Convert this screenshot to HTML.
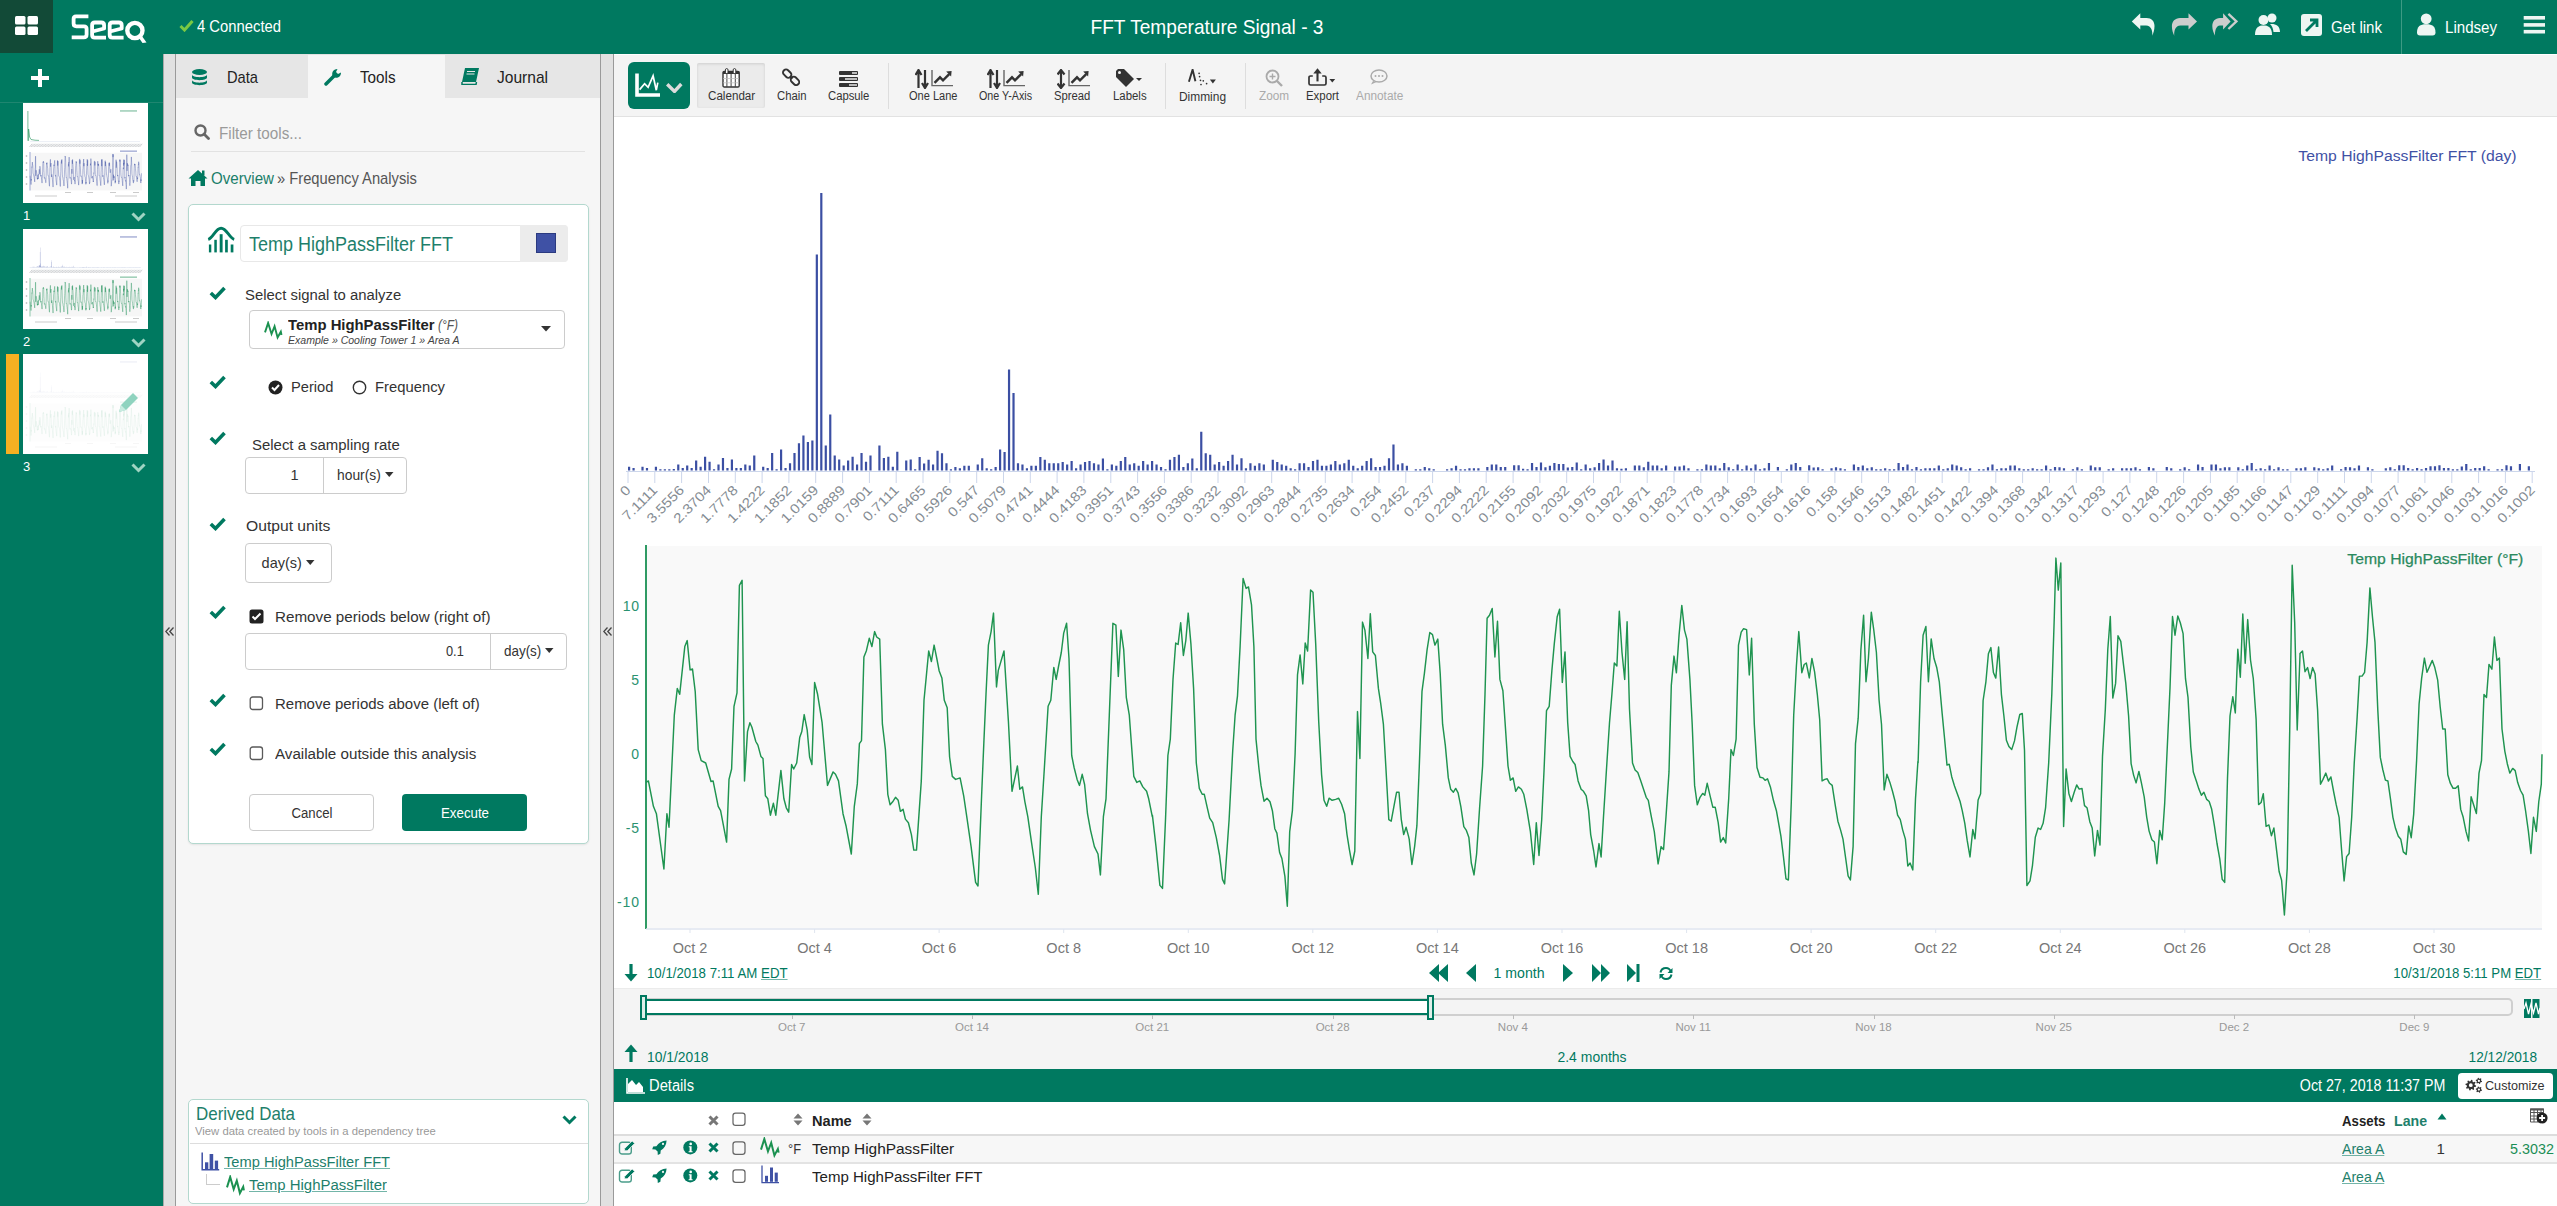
<!DOCTYPE html>
<html><head><meta charset="utf-8"><title>Seeq</title>
<style>
*{box-sizing:border-box;margin:0;padding:0}
html,body{width:2557px;height:1206px;overflow:hidden}
body{position:relative;font-family:"Liberation Sans",sans-serif;background:#fff;color:#333}
.a{position:absolute;display:block}
.t{position:absolute;line-height:1;white-space:nowrap}
u{text-decoration:underline;text-decoration-color:rgba(0,121,96,0.55)}
</style></head><body>

<div class="a" style="left:0px;top:0px;width:2557px;height:54px;background:#007960"></div>
<div class="a" style="left:0px;top:0px;width:53px;height:53px;background:#124a37"></div>
<svg class="a" style="left:15px;top:16px;" width="24" height="20" viewBox="0 0 24 20"><rect x="0" y="0" width="10.5" height="8.5" rx="1.5" fill="#fff"/><rect x="12.5" y="0" width="10.5" height="8.5" rx="1.5" fill="#fff"/><rect x="0" y="10.5" width="10.5" height="8.5" rx="1.5" fill="#fff"/><rect x="12.5" y="10.5" width="10.5" height="8.5" rx="1.5" fill="#fff"/></svg>
<svg class="a" style="left:65px;top:8px;" width="90" height="40" viewBox="0 0 90 40"><g stroke="#fff" stroke-width="3.8" fill="none" stroke-linejoin="round"><path d="M23.4 8.4 H11 Q8.6 8.4 8.6 11 V15.6 Q8.6 18.3 11.3 18.3 H19 Q21.6 18.3 21.6 21 V26.5 Q21.6 29.4 18.8 29.4 H6.7"/><path d="M41 29.6 H29.8 Q27.1 29.6 27.1 26.9 V17.2 Q27.1 14.5 29.8 14.5 H36.3 Q39.1 14.5 39.1 17.2 V20.5 L27.5 23.5"/><path d="M58.6 29.6 H47.4 Q44.7 29.6 44.7 26.9 V17.2 Q44.7 14.5 47.4 14.5 H53.9 Q56.7 14.5 56.7 17.2 V20.5 L45.1 23.5"/><circle cx="69.9" cy="22.5" r="7.6" stroke-width="4.4"/></g><path d="M72.5 28 L75.5 26 L81.5 34.5 L77.5 35Z" fill="#fff"/></svg>
<svg class="a" style="left:179px;top:19px;" width="15" height="13" viewBox="0 0 15 13"><path d="M1.5 7 L5.5 11 L13.5 2" stroke="#7ac943" stroke-width="3" fill="none"/></svg>
<div class="t " style="left:197.0px;top:18.5px;font-size:16px;color:#fff;font-weight:normal;transform-origin:0 0;transform:scaleX(0.926);">4 Connected</div>
<div class="t" style="left:1207.3px;top:16.0px;font-size:21px;color:#fff;font-weight:normal;transform:translateX(-50%) scaleX(0.910);">FFT Temperature Signal - 3</div>
<svg class="a" style="left:2130px;top:12px;" width="27" height="26" viewBox="0 0 27 26"><path d="M1.8 9.4 L10.3 1.2 V5.9 H16.5 C21.5 5.9 24.5 9 24.5 14 C24.5 18 23.2 21.5 22.3 23.8 C22.8 19.5 21.5 13.4 16 13.4 H10.3 V17.6 Z" fill="#eef6f3"/></svg>
<svg class="a" style="left:2168px;top:12px;" width="30" height="26" viewBox="0 0 30 26"><path d="M29 9.4 L20.5 1.2 V5.9 H12 C7 5.9 3.9 9.5 3.9 14 C3.9 18 5 21.5 6.3 23.8 C5.8 19.5 7 13.4 12.5 13.4 H20.5 V17.6 Z" fill="#cdcdcd"/></svg>
<svg class="a" style="left:2210px;top:12px;" width="28" height="26" viewBox="0 0 28 26"><path d="M20.6 9.4 L13.1 1.2 V5.9 H10 C5 5.9 2.3 9.5 2.3 14 C2.3 18 3.8 21.5 5.1 23.8 C4.6 19.5 6 13.4 10 13.4 H13.1 V17.6 Z" fill="#cdcdcd"/><path d="M18.4 1.8 L26.4 9.4 L18.4 17" stroke="#cdcdcd" stroke-width="2.3" fill="none"/></svg>
<svg class="a" style="left:2255px;top:13px;" width="26" height="23" viewBox="0 0 26 23"><circle cx="8.5" cy="7" r="5" fill="#eef6f3"/><path d="M0 22 C0 14 4 12.5 8.5 12.5 C13 12.5 17 14 17 22 Z" fill="#eef6f3"/><circle cx="17" cy="5" r="4.5" fill="#eef6f3"/><path d="M15 11 C20 10.5 25 12 25 19 L18.5 19 C18 15 17 13 15 11Z" fill="#eef6f3"/></svg>
<svg class="a" style="left:2301px;top:14px;" width="21" height="22" viewBox="0 0 21 22"><rect x="0" y="0" width="21" height="22" rx="3" fill="#eef6f3"/><path d="M5 17 L15 7 M9 6 L16 6 L16 13" stroke="#007960" stroke-width="2.8" fill="none"/></svg>
<div class="t " style="left:2331.0px;top:19.8px;font-size:16px;color:#fff;font-weight:normal;transform-origin:0 0;transform:scaleX(0.940);">Get link</div>
<div class="a" style="left:2401px;top:0px;width:1px;height:54px;background:#3d9a84"></div>
<svg class="a" style="left:2417px;top:13px;" width="19" height="23" viewBox="0 0 19 23"><circle cx="9.2" cy="5.8" r="5.4" fill="#eef6f3"/><path d="M0 19.5 C0 13.5 3 11.3 9.2 11.3 C15.5 11.3 18.5 13.5 18.5 19.5 Q18.5 22.4 15.5 22.4 H3 Q0 22.4 0 19.5Z" fill="#eef6f3"/></svg>
<div class="t " style="left:2445.0px;top:19.8px;font-size:16px;color:#fff;font-weight:normal;transform-origin:0 0;transform:scaleX(0.943);">Lindsey</div>
<svg class="a" style="left:2523px;top:16px;" width="23" height="18" viewBox="0 0 23 18"><rect x="0.7" y="0" width="21.3" height="3.6" fill="#eef6f3"/><rect x="0.7" y="7.1" width="21.3" height="3.6" fill="#eef6f3"/><rect x="0.7" y="13.9" width="21.3" height="3.6" fill="#eef6f3"/></svg>
<div class="a" style="left:0px;top:54px;width:163px;height:1152px;background:#007960"></div>
<div class="a" style="left:0px;top:102px;width:163px;height:1px;background:#1f8670"></div>
<svg class="a" style="left:31px;top:69px;" width="18" height="18" viewBox="0 0 18 18"><rect x="7" y="0" width="4" height="18" fill="#fff"/><rect x="0" y="7" width="18" height="4" fill="#fff"/></svg>
<div class="a" style="left:6px;top:354px;width:13px;height:100px;background:#f6b022"></div>
<svg class="a" style="left:23px;top:103px;" width="125" height="100" viewBox="0 0 125 100"><rect x="0" y="0" width="125" height="100" fill="#fff"/><path d="M4.9 37.8 V8 M5.6 37.8 V26 L6.6 34 L8 36.5 L12 37.2 L16 37.4" stroke="#1b8e55" stroke-width="0.7" fill="none" opacity="0.85"/><path d="M7 38.6 L117 38.6" stroke="#dde3ee" stroke-width="0.6"/><path d="M6.50 44 l2.6 -3.2 M8.05 44 l2.6 -3.2 M9.60 44 l2.6 -3.2 M11.15 44 l2.6 -3.2 M12.70 44 l2.6 -3.2 M14.25 44 l2.6 -3.2 M15.80 44 l2.6 -3.2 M17.35 44 l2.6 -3.2 M18.90 44 l2.6 -3.2 M20.45 44 l2.6 -3.2 M22.00 44 l2.6 -3.2 M23.55 44 l2.6 -3.2 M25.10 44 l2.6 -3.2 M26.65 44 l2.6 -3.2 M28.20 44 l2.6 -3.2 M29.75 44 l2.6 -3.2 M31.30 44 l2.6 -3.2 M32.85 44 l2.6 -3.2 M34.40 44 l2.6 -3.2 M35.95 44 l2.6 -3.2 M37.50 44 l2.6 -3.2 M39.05 44 l2.6 -3.2 M40.60 44 l2.6 -3.2 M42.15 44 l2.6 -3.2 M43.70 44 l2.6 -3.2 M45.25 44 l2.6 -3.2 M46.80 44 l2.6 -3.2 M48.35 44 l2.6 -3.2 M49.90 44 l2.6 -3.2 M51.45 44 l2.6 -3.2 M53.00 44 l2.6 -3.2 M54.55 44 l2.6 -3.2 M56.10 44 l2.6 -3.2 M57.65 44 l2.6 -3.2 M59.20 44 l2.6 -3.2 M60.75 44 l2.6 -3.2 M62.30 44 l2.6 -3.2 M63.85 44 l2.6 -3.2 M65.40 44 l2.6 -3.2 M66.95 44 l2.6 -3.2 M68.50 44 l2.6 -3.2 M70.05 44 l2.6 -3.2 M71.60 44 l2.6 -3.2 M73.15 44 l2.6 -3.2 M74.70 44 l2.6 -3.2 M76.25 44 l2.6 -3.2 M77.80 44 l2.6 -3.2 M79.35 44 l2.6 -3.2 M80.90 44 l2.6 -3.2 M82.45 44 l2.6 -3.2 M84.00 44 l2.6 -3.2 M85.55 44 l2.6 -3.2 M87.10 44 l2.6 -3.2 M88.65 44 l2.6 -3.2 M90.20 44 l2.6 -3.2 M91.75 44 l2.6 -3.2 M93.30 44 l2.6 -3.2 M94.85 44 l2.6 -3.2 M96.40 44 l2.6 -3.2 M97.95 44 l2.6 -3.2 M99.50 44 l2.6 -3.2 M101.05 44 l2.6 -3.2 M102.60 44 l2.6 -3.2 M104.15 44 l2.6 -3.2 M105.70 44 l2.6 -3.2 M107.25 44 l2.6 -3.2 M108.80 44 l2.6 -3.2 M110.35 44 l2.6 -3.2 M111.90 44 l2.6 -3.2 M113.45 44 l2.6 -3.2 M115.00 44 l2.6 -3.2 M116.55 44 l2.6 -3.2 " stroke="#8a8f95" stroke-width="0.55" opacity="0.7"/><rect x="7.5" y="49.8" width="111.5" height="37.6" fill="#f6f6f6"/><path d="M7 49 L7 87.5" stroke="#3f51a5" stroke-width="0.5"/><use href="#wv" stroke="#3f51a5" fill="none" stroke-width="6" opacity="0.8" transform="translate(-31 -3.95) scale(0.0588 0.0984)"/><rect x="97" y="7.3" width="17" height="1.3" fill="#1b8e55" opacity="0.5"/><rect x="97" y="47.5" width="17" height="1.3" fill="#3f51a5" opacity="0.5"/><path d="M3.5 52 V54 M3.5 59 V61 M3.5 66 V68 M3.5 73 V75 M3.5 80 V82" stroke="#999" stroke-width="1.4" opacity="0.5"/><path d="M42 89.5 h6 M64 89.5 h6 M87 89.5 h6 M110 89.5 h6" stroke="#aaa" stroke-width="1.1" opacity="0.6"/><path d="M12 93 h22 M92 93 h22" stroke="#aaa" stroke-width="1.1" opacity="0.6"/></svg>
<svg class="a" style="left:23px;top:229px;" width="125" height="100" viewBox="0 0 125 100"><rect x="0" y="0" width="125" height="100" fill="#fff"/><use href="#fb" fill="#3f51a5" transform="translate(-31 4.7) scale(0.0588 0.072)"/><path d="M7 38.6 L117 38.6" stroke="#dde3ee" stroke-width="0.6"/><path d="M6.50 44 l2.6 -3.2 M8.05 44 l2.6 -3.2 M9.60 44 l2.6 -3.2 M11.15 44 l2.6 -3.2 M12.70 44 l2.6 -3.2 M14.25 44 l2.6 -3.2 M15.80 44 l2.6 -3.2 M17.35 44 l2.6 -3.2 M18.90 44 l2.6 -3.2 M20.45 44 l2.6 -3.2 M22.00 44 l2.6 -3.2 M23.55 44 l2.6 -3.2 M25.10 44 l2.6 -3.2 M26.65 44 l2.6 -3.2 M28.20 44 l2.6 -3.2 M29.75 44 l2.6 -3.2 M31.30 44 l2.6 -3.2 M32.85 44 l2.6 -3.2 M34.40 44 l2.6 -3.2 M35.95 44 l2.6 -3.2 M37.50 44 l2.6 -3.2 M39.05 44 l2.6 -3.2 M40.60 44 l2.6 -3.2 M42.15 44 l2.6 -3.2 M43.70 44 l2.6 -3.2 M45.25 44 l2.6 -3.2 M46.80 44 l2.6 -3.2 M48.35 44 l2.6 -3.2 M49.90 44 l2.6 -3.2 M51.45 44 l2.6 -3.2 M53.00 44 l2.6 -3.2 M54.55 44 l2.6 -3.2 M56.10 44 l2.6 -3.2 M57.65 44 l2.6 -3.2 M59.20 44 l2.6 -3.2 M60.75 44 l2.6 -3.2 M62.30 44 l2.6 -3.2 M63.85 44 l2.6 -3.2 M65.40 44 l2.6 -3.2 M66.95 44 l2.6 -3.2 M68.50 44 l2.6 -3.2 M70.05 44 l2.6 -3.2 M71.60 44 l2.6 -3.2 M73.15 44 l2.6 -3.2 M74.70 44 l2.6 -3.2 M76.25 44 l2.6 -3.2 M77.80 44 l2.6 -3.2 M79.35 44 l2.6 -3.2 M80.90 44 l2.6 -3.2 M82.45 44 l2.6 -3.2 M84.00 44 l2.6 -3.2 M85.55 44 l2.6 -3.2 M87.10 44 l2.6 -3.2 M88.65 44 l2.6 -3.2 M90.20 44 l2.6 -3.2 M91.75 44 l2.6 -3.2 M93.30 44 l2.6 -3.2 M94.85 44 l2.6 -3.2 M96.40 44 l2.6 -3.2 M97.95 44 l2.6 -3.2 M99.50 44 l2.6 -3.2 M101.05 44 l2.6 -3.2 M102.60 44 l2.6 -3.2 M104.15 44 l2.6 -3.2 M105.70 44 l2.6 -3.2 M107.25 44 l2.6 -3.2 M108.80 44 l2.6 -3.2 M110.35 44 l2.6 -3.2 M111.90 44 l2.6 -3.2 M113.45 44 l2.6 -3.2 M115.00 44 l2.6 -3.2 M116.55 44 l2.6 -3.2 " stroke="#8a8f95" stroke-width="0.55" opacity="0.7"/><rect x="7.5" y="49.8" width="111.5" height="37.6" fill="#f6f6f6"/><path d="M7 49 L7 87.5" stroke="#1b8e55" stroke-width="0.5"/><use href="#wv" stroke="#1b8e55" fill="none" stroke-width="6" opacity="0.8" transform="translate(-31 -3.95) scale(0.0588 0.0984)"/><rect x="97" y="7.3" width="17" height="1.3" fill="#3f51a5" opacity="0.5"/><rect x="97" y="47.5" width="17" height="1.3" fill="#1b8e55" opacity="0.5"/><path d="M3.5 52 V54 M3.5 59 V61 M3.5 66 V68 M3.5 73 V75 M3.5 80 V82" stroke="#999" stroke-width="1.4" opacity="0.5"/><path d="M42 89.5 h6 M64 89.5 h6 M87 89.5 h6 M110 89.5 h6" stroke="#aaa" stroke-width="1.1" opacity="0.6"/><path d="M12 93 h22 M92 93 h22" stroke="#aaa" stroke-width="1.1" opacity="0.6"/></svg>
<svg class="a" style="left:23px;top:354px;" width="125" height="100" viewBox="0 0 125 100"><rect x="0" y="0" width="125" height="100" fill="#fff"/><g opacity="0.16"><use href="#fb" fill="#3f51a5" transform="translate(-31 4.7) scale(0.0588 0.072)"/><path d="M7 38.6 L117 38.6" stroke="#dde3ee" stroke-width="0.6"/><path d="M6.50 44 l2.6 -3.2 M8.05 44 l2.6 -3.2 M9.60 44 l2.6 -3.2 M11.15 44 l2.6 -3.2 M12.70 44 l2.6 -3.2 M14.25 44 l2.6 -3.2 M15.80 44 l2.6 -3.2 M17.35 44 l2.6 -3.2 M18.90 44 l2.6 -3.2 M20.45 44 l2.6 -3.2 M22.00 44 l2.6 -3.2 M23.55 44 l2.6 -3.2 M25.10 44 l2.6 -3.2 M26.65 44 l2.6 -3.2 M28.20 44 l2.6 -3.2 M29.75 44 l2.6 -3.2 M31.30 44 l2.6 -3.2 M32.85 44 l2.6 -3.2 M34.40 44 l2.6 -3.2 M35.95 44 l2.6 -3.2 M37.50 44 l2.6 -3.2 M39.05 44 l2.6 -3.2 M40.60 44 l2.6 -3.2 M42.15 44 l2.6 -3.2 M43.70 44 l2.6 -3.2 M45.25 44 l2.6 -3.2 M46.80 44 l2.6 -3.2 M48.35 44 l2.6 -3.2 M49.90 44 l2.6 -3.2 M51.45 44 l2.6 -3.2 M53.00 44 l2.6 -3.2 M54.55 44 l2.6 -3.2 M56.10 44 l2.6 -3.2 M57.65 44 l2.6 -3.2 M59.20 44 l2.6 -3.2 M60.75 44 l2.6 -3.2 M62.30 44 l2.6 -3.2 M63.85 44 l2.6 -3.2 M65.40 44 l2.6 -3.2 M66.95 44 l2.6 -3.2 M68.50 44 l2.6 -3.2 M70.05 44 l2.6 -3.2 M71.60 44 l2.6 -3.2 M73.15 44 l2.6 -3.2 M74.70 44 l2.6 -3.2 M76.25 44 l2.6 -3.2 M77.80 44 l2.6 -3.2 M79.35 44 l2.6 -3.2 M80.90 44 l2.6 -3.2 M82.45 44 l2.6 -3.2 M84.00 44 l2.6 -3.2 M85.55 44 l2.6 -3.2 M87.10 44 l2.6 -3.2 M88.65 44 l2.6 -3.2 M90.20 44 l2.6 -3.2 M91.75 44 l2.6 -3.2 M93.30 44 l2.6 -3.2 M94.85 44 l2.6 -3.2 M96.40 44 l2.6 -3.2 M97.95 44 l2.6 -3.2 M99.50 44 l2.6 -3.2 M101.05 44 l2.6 -3.2 M102.60 44 l2.6 -3.2 M104.15 44 l2.6 -3.2 M105.70 44 l2.6 -3.2 M107.25 44 l2.6 -3.2 M108.80 44 l2.6 -3.2 M110.35 44 l2.6 -3.2 M111.90 44 l2.6 -3.2 M113.45 44 l2.6 -3.2 M115.00 44 l2.6 -3.2 M116.55 44 l2.6 -3.2 " stroke="#8a8f95" stroke-width="0.55" opacity="0.7"/><rect x="7.5" y="49.8" width="111.5" height="37.6" fill="#f6f6f6"/><path d="M7 49 L7 87.5" stroke="#1b8e55" stroke-width="0.5"/><use href="#wv" stroke="#1b8e55" fill="none" stroke-width="6" opacity="0.8" transform="translate(-31 -3.95) scale(0.0588 0.0984)"/><rect x="97" y="7.3" width="17" height="1.3" fill="#3f51a5" opacity="0.5"/><rect x="97" y="47.5" width="17" height="1.3" fill="#1b8e55" opacity="0.5"/><path d="M3.5 52 V54 M3.5 59 V61 M3.5 66 V68 M3.5 73 V75 M3.5 80 V82" stroke="#999" stroke-width="1.4" opacity="0.5"/><path d="M42 89.5 h6 M64 89.5 h6 M87 89.5 h6 M110 89.5 h6" stroke="#aaa" stroke-width="1.1" opacity="0.6"/><path d="M12 93 h22 M92 93 h22" stroke="#aaa" stroke-width="1.1" opacity="0.6"/></g></svg>
<svg class="a" style="left:118px;top:391px;" width="22" height="22" viewBox="0 0 22 22"><path d="M1 21 L3 14 L15 2 L20 7 L8 19 Z" fill="#8fd3bf"/><path d="M1 21 L3 14 L8 19Z" fill="#c8ebe0"/></svg>
<div class="t " style="left:23.0px;top:209.0px;font-size:13px;color:#fff;font-weight:normal;transform-origin:0 0;">1</div>
<svg class="a" style="left:131px;top:212px;" width="15" height="10" viewBox="0 0 15 10"><path d="M1.5 1.5 L7.5 7.5 L13.5 1.5" stroke="#9fd4c3" stroke-width="3" fill="none"/></svg>
<div class="t " style="left:23.0px;top:335.0px;font-size:13px;color:#fff;font-weight:normal;transform-origin:0 0;">2</div>
<svg class="a" style="left:131px;top:338px;" width="15" height="10" viewBox="0 0 15 10"><path d="M1.5 1.5 L7.5 7.5 L13.5 1.5" stroke="#9fd4c3" stroke-width="3" fill="none"/></svg>
<div class="t " style="left:23.0px;top:460.0px;font-size:13px;color:#fff;font-weight:normal;transform-origin:0 0;">3</div>
<svg class="a" style="left:131px;top:463px;" width="15" height="10" viewBox="0 0 15 10"><path d="M1.5 1.5 L7.5 7.5 L13.5 1.5" stroke="#9fd4c3" stroke-width="3" fill="none"/></svg>
<div class="a" style="left:163px;top:54px;width:450px;height:1152px;background:#e1e1e1"></div>
<div class="a" style="left:175px;top:54px;width:1px;height:1152px;background:#9a9a9a"></div>
<div class="a" style="left:163px;top:54px;width:1px;height:1152px;background:#a9a9a9"></div>
<div class="a" style="left:600px;top:54px;width:1px;height:1152px;background:#9a9a9a"></div>
<div class="a" style="left:613px;top:54px;width:1px;height:1152px;background:#9a9a9a"></div>
<div class="a" style="left:176px;top:55px;width:424px;height:1151px;background:#f6f6f6"></div>
<div class="a" style="left:176px;top:55px;width:132px;height:43px;background:#e6e6e6"></div>
<div class="a" style="left:445px;top:55px;width:155px;height:43px;background:#e6e6e6"></div>
<svg class="a" style="left:192px;top:69px;" width="15" height="17" viewBox="0 0 15 17"><ellipse cx="7.5" cy="3" rx="7.5" ry="3" fill="#007960"/><path d="M0 5.5 C0 9 15 9 15 5.5 L15 8.5 C15 12 0 12 0 8.5Z" fill="#007960"/><path d="M0 11 C0 14.5 15 14.5 15 11 L15 13.5 C15 17 0 17 0 13.5Z" fill="#007960"/></svg>
<div class="t " style="left:227.0px;top:68.6px;font-size:17px;color:#222;font-weight:normal;transform-origin:0 0;transform:scaleX(0.863);">Data</div>
<svg class="a" style="left:324px;top:68px;" width="18" height="18" viewBox="0 0 18 18"><path d="M2 16 L10 8" stroke="#007960" stroke-width="3.5" stroke-linecap="round"/><path d="M9 9 C7 5 9 1 13.5 1 L12 4 L14 6 L17 4.5 C17 9 13 11 9 9Z" fill="#007960"/></svg>
<div class="t " style="left:359.5px;top:68.6px;font-size:17px;color:#222;font-weight:normal;transform-origin:0 0;transform:scaleX(0.897);">Tools</div>
<svg class="a" style="left:461px;top:68px;" width="18" height="17" viewBox="0 0 18 17"><path d="M4 0 L18 0 L15 14 L1 14 Z" fill="#007960"/><path d="M1 14 L1 16.5 L15 16.5 L15.5 14" stroke="#007960" stroke-width="1.5" fill="none"/><path d="M6 3.5 L14 3.5 M5.5 6 L13.5 6" stroke="#e6e6e6" stroke-width="1.2"/></svg>
<div class="t " style="left:496.5px;top:68.6px;font-size:17px;color:#222;font-weight:normal;transform-origin:0 0;transform:scaleX(0.915);">Journal</div>
<svg class="a" style="left:194px;top:124px;" width="16" height="17" viewBox="0 0 16 17"><circle cx="6.5" cy="6.5" r="5" stroke="#666" stroke-width="2.4" fill="none"/><path d="M10 10 L14.5 14.5" stroke="#666" stroke-width="2.8" stroke-linecap="round"/></svg>
<div class="t " style="left:219.0px;top:124.8px;font-size:16.5px;color:#9a9a9a;font-weight:normal;transform-origin:0 0;transform:scaleX(0.924);">Filter tools...</div>
<div class="a" style="left:191px;top:151px;width:394px;height:1px;background:#e2e2e2"></div>
<svg class="a" style="left:188px;top:169px;" width="20" height="17" viewBox="0 0 20 17"><path d="M10 1 L19.5 9.5 L17 9.5 L17 17 L12.5 17 L12.5 12 L7.5 12 L7.5 17 L3 17 L3 9.5 L0.5 9.5 Z" fill="#007960"/><rect x="14" y="1.5" width="2.5" height="5" fill="#007960"/></svg>
<div class="t " style="left:211.0px;top:169.6px;font-size:17px;color:#1a7e6a;font-weight:normal;transform-origin:0 0;transform:scaleX(0.889);">Overview</div>
<div class="t " style="left:277.0px;top:169.6px;font-size:17px;color:#555;font-weight:normal;transform-origin:0 0;transform:scaleX(0.866);">» Frequency Analysis</div>
<div class="a" style="left:188px;top:204px;width:401px;height:640px;background:#fff;border:1px solid #b3d8ce;border-radius:5px;box-shadow:0 1px 2px rgba(0,0,0,0.08)"></div>
<svg class="a" style="left:207px;top:226px;" width="29" height="28" viewBox="0 0 29 28"><path d="M1.2 13.4 C6 12 8.5 2.2 14.1 2.2 C19.7 2.2 22.2 12 27.2 13.4" stroke="#007960" stroke-width="2.9" fill="none"/><rect x="1.9" y="18.5" width="2.4" height="7.9" fill="#007960"/><rect x="7.3" y="13.8" width="2.5" height="12.6" fill="#007960"/><rect x="12.7" y="8.2" width="2.9" height="18.2" fill="#007960"/><rect x="18.1" y="13.8" width="2.7" height="12.6" fill="#007960"/><rect x="23.7" y="18.5" width="2.7" height="7.9" fill="#007960"/></svg>
<div class="a" style="left:240px;top:225px;width:328px;height:37px;background:#fff;border:1px solid #e8e8e8;border-radius:4px"></div>
<div class="a" style="left:520px;top:225px;width:48px;height:37px;background:#ececec;border-radius:0 4px 4px 0"></div>
<div class="a" style="left:536px;top:233px;width:20px;height:20px;background:#3f51a5;border:1px solid #2b3a80"></div>
<div class="t " style="left:248.5px;top:233.7px;font-size:20px;color:#1e7f6b;font-weight:normal;transform-origin:0 0;transform:scaleX(0.900);">Temp HighPassFilter FFT</div>
<svg class="a" style="left:209px;top:286px;" width="17" height="14" viewBox="0 0 17 14"><path d="M1.8 7 L6.5 11.5 L15.5 2" stroke="#007960" stroke-width="3.6" fill="none"/></svg>
<div class="t " style="left:245.3px;top:286.7px;font-size:15.2px;color:#333;font-weight:normal;transform-origin:0 0;transform:scaleX(0.979);">Select signal to analyze</div>
<div class="a" style="left:249px;top:310px;width:316px;height:39px;background:#fff;border:1px solid #ccc;border-radius:4px"></div>
<svg class="a" style="left:262.5px;top:320.5px;" width="21" height="19" viewBox="0 0 21 19"><path d="M2.00 11.37 L5.12 2.00 L8.53 12.99 L11.57 5.33 L14.59 16.50 L17.82 10.73 L18.50 14.06" stroke="#1b9150" stroke-width="1.9" fill="none" stroke-linejoin="miter"/></svg>
<div class="t " style="left:288.0px;top:316.8px;font-size:15px;color:#222;font-weight:bold;transform-origin:0 0;transform:scaleX(0.990);">Temp HighPassFilter</div>
<div class="t " style="left:438.0px;top:316.8px;font-size:15px;color:#555;font-weight:normal;transform-origin:0 0;transform:scaleX(0.795);"><i>(°F)</i></div>
<div class="t " style="left:288.0px;top:335.1px;font-size:11px;color:#444;font-weight:normal;transform-origin:0 0;transform:scaleX(0.957);"><i>Example » Cooling Tower 1 » Area A</i></div>
<svg class="a" style="left:541px;top:326px;" width="11" height="6" viewBox="0 0 11 6"><path d="M0 0 L10 0 L5 5.5Z" fill="#333"/></svg>
<svg class="a" style="left:209px;top:375px;" width="17" height="14" viewBox="0 0 17 14"><path d="M1.8 7 L6.5 11.5 L15.5 2" stroke="#007960" stroke-width="3.6" fill="none"/></svg>
<svg class="a" style="left:268px;top:380px;" width="15" height="15" viewBox="0 0 15 15"><circle cx="7.5" cy="7.5" r="7" fill="#222"/><path d="M4 7.5 L6.5 10 L11 5" stroke="#fff" stroke-width="2" fill="none"/></svg>
<div class="t " style="left:290.5px;top:379.1px;font-size:15.2px;color:#333;font-weight:normal;transform-origin:0 0;transform:scaleX(0.967);">Period</div>
<svg class="a" style="left:352px;top:380px;" width="15" height="15" viewBox="0 0 15 15"><circle cx="7.5" cy="7.5" r="6.2" stroke="#333" stroke-width="1.4" fill="none"/></svg>
<div class="t " style="left:374.5px;top:379.1px;font-size:15.2px;color:#333;font-weight:normal;transform-origin:0 0;transform:scaleX(0.975);">Frequency</div>
<svg class="a" style="left:209px;top:431px;" width="17" height="14" viewBox="0 0 17 14"><path d="M1.8 7 L6.5 11.5 L15.5 2" stroke="#007960" stroke-width="3.6" fill="none"/></svg>
<div class="t " style="left:252.0px;top:437.1px;font-size:15.2px;color:#333;font-weight:normal;transform-origin:0 0;transform:scaleX(0.983);">Select a sampling rate</div>
<div class="a" style="left:245px;top:457px;width:162px;height:37px;background:#fff;border:1px solid #ccc;border-radius:4px"></div>
<div class="a" style="left:323px;top:458px;width:1px;height:35px;background:#ccc"></div>
<div class="t " style="left:290.5px;top:467.7px;font-size:14.5px;color:#333;font-weight:normal;transform-origin:0 0;">1</div>
<div class="t " style="left:337.0px;top:467.7px;font-size:14.5px;color:#333;font-weight:normal;transform-origin:0 0;transform:scaleX(0.954);">hour(s)</div>
<svg class="a" style="left:385px;top:472px;" width="9" height="6" viewBox="0 0 9 6"><path d="M0 0 L8.5 0 L4.25 5Z" fill="#333"/></svg>
<svg class="a" style="left:209px;top:517px;" width="17" height="14" viewBox="0 0 17 14"><path d="M1.8 7 L6.5 11.5 L15.5 2" stroke="#007960" stroke-width="3.6" fill="none"/></svg>
<div class="t " style="left:245.6px;top:518.1px;font-size:15.2px;color:#333;font-weight:normal;transform-origin:0 0;transform:scaleX(1.031);">Output units</div>
<div class="a" style="left:245px;top:543px;width:87px;height:40px;background:#fff;border:1px solid #ccc;border-radius:4px"></div>
<div class="t " style="left:261.6px;top:555.7px;font-size:14.5px;color:#333;font-weight:normal;transform-origin:0 0;transform:scaleX(1.000);">day(s)</div>
<svg class="a" style="left:306px;top:560px;" width="9" height="6" viewBox="0 0 9 6"><path d="M0 0 L8.5 0 L4.25 5Z" fill="#333"/></svg>
<svg class="a" style="left:209px;top:605px;" width="17" height="14" viewBox="0 0 17 14"><path d="M1.8 7 L6.5 11.5 L15.5 2" stroke="#007960" stroke-width="3.6" fill="none"/></svg>
<svg class="a" style="left:249px;top:609px;" width="15" height="15" viewBox="0 0 15 15"><rect x="0.5" y="0.5" width="14" height="14" rx="2.5" fill="#222"/><path d="M3.5 7.5 L6 10 L11.5 4.5" stroke="#fff" stroke-width="2" fill="none"/></svg>
<div class="t " style="left:275.0px;top:609.1px;font-size:15.2px;color:#333;font-weight:normal;transform-origin:0 0;transform:scaleX(1.001);">Remove periods below (right of)</div>
<div class="a" style="left:245px;top:633px;width:322px;height:37px;background:#fff;border:1px solid #ccc;border-radius:4px"></div>
<div class="a" style="left:490px;top:634px;width:1px;height:35px;background:#ccc"></div>
<div class="t " style="left:446.2px;top:643.7px;font-size:14.5px;color:#333;font-weight:normal;transform-origin:0 0;transform:scaleX(0.883);">0.1</div>
<div class="t " style="left:504.0px;top:643.7px;font-size:14.5px;color:#333;font-weight:normal;transform-origin:0 0;transform:scaleX(0.926);">day(s)</div>
<svg class="a" style="left:545px;top:648px;" width="9" height="6" viewBox="0 0 9 6"><path d="M0 0 L8.5 0 L4.25 5Z" fill="#333"/></svg>
<svg class="a" style="left:209px;top:693px;" width="17" height="14" viewBox="0 0 17 14"><path d="M1.8 7 L6.5 11.5 L15.5 2" stroke="#007960" stroke-width="3.6" fill="none"/></svg>
<svg class="a" style="left:249px;top:696px;" width="15" height="15" viewBox="0 0 15 15"><rect x="1.2" y="1" width="12.3" height="12.5" rx="2.5" stroke="#5a5a5a" stroke-width="1.3" fill="#fff"/></svg>
<div class="t " style="left:275.3px;top:696.1px;font-size:15.2px;color:#333;font-weight:normal;transform-origin:0 0;transform:scaleX(0.986);">Remove periods above (left of)</div>
<svg class="a" style="left:209px;top:742px;" width="17" height="14" viewBox="0 0 17 14"><path d="M1.8 7 L6.5 11.5 L15.5 2" stroke="#007960" stroke-width="3.6" fill="none"/></svg>
<svg class="a" style="left:249px;top:746px;" width="15" height="15" viewBox="0 0 15 15"><rect x="1.2" y="1" width="12.3" height="12.5" rx="2.5" stroke="#5a5a5a" stroke-width="1.3" fill="#fff"/></svg>
<div class="t " style="left:274.5px;top:746.1px;font-size:15.2px;color:#333;font-weight:normal;transform-origin:0 0;transform:scaleX(0.999);">Available outside this analysis</div>
<div class="a" style="left:249px;top:794px;width:125px;height:37px;background:#fff;border:1px solid #ccc;border-radius:4px"></div>
<div class="t" style="left:311.5px;top:804.6px;font-size:15.5px;color:#333;font-weight:normal;transform:translateX(-50%) scaleX(0.850);">Cancel</div>
<div class="a" style="left:402px;top:794px;width:125px;height:37px;background:#007960;border-radius:4px"></div>
<div class="t" style="left:465.1px;top:804.6px;font-size:15.5px;color:#fff;font-weight:normal;transform:translateX(-50%) scaleX(0.857);">Execute</div>
<div class="a" style="left:188px;top:1099px;width:401px;height:105px;background:#fff;border:1px solid #b3d8ce;border-radius:5px"></div>
<div class="a" style="left:190px;top:1143px;width:398px;height:1px;background:#ddd"></div>
<div class="t " style="left:195.6px;top:1103.5px;font-size:19px;color:#1e7f6b;font-weight:normal;transform-origin:0 0;transform:scaleX(0.893);">Derived Data</div>
<div class="t " style="left:195.1px;top:1125.9px;font-size:11px;color:#999;font-weight:normal;transform-origin:0 0;transform:scaleX(1.026);">View data created by tools in a dependency tree</div>
<svg class="a" style="left:562px;top:1115px;" width="15" height="10" viewBox="0 0 15 10"><path d="M1.5 1.5 L7.5 7.5 L13.5 1.5" stroke="#007960" stroke-width="3" fill="none"/></svg>
<svg class="a" style="left:201px;top:1152px;" width="19" height="19" viewBox="0 0 19 19"><path d="M1.2 0.4 V17.7 H18.2" stroke="#3f51a5" stroke-width="1.5" fill="none"/><rect x="4" y="10.3" width="3.3" height="6.7" fill="#3f51a5"/><rect x="8.6" y="2" width="3.6" height="15" fill="#3f51a5"/><rect x="13.8" y="8.6" width="3.3" height="8.4" fill="#3f51a5"/></svg>
<div class="t " style="left:224.0px;top:1154.4px;font-size:15.5px;color:#1e7f6b;font-weight:normal;transform-origin:0 0;transform:scaleX(0.945);"><u>Temp HighPassFilter FFT</u></div>
<div class="a" style="left:206px;top:1174px;width:1px;height:11px;background:#ccc"></div>
<div class="a" style="left:206px;top:1184px;width:14px;height:1px;background:#ccc"></div>
<svg class="a" style="left:224.6px;top:1174.5px;" width="21" height="21" viewBox="0 0 21 21"><path d="M2.00 12.40 L5.19 2.00 L8.69 14.20 L11.80 5.70 L14.89 18.10 L18.21 11.69 L18.90 15.40" stroke="#1b9150" stroke-width="2.0" fill="none" stroke-linejoin="miter"/></svg>
<div class="t " style="left:249.0px;top:1177.4px;font-size:15.5px;color:#1e7f6b;font-weight:normal;transform-origin:0 0;transform:scaleX(0.965);"><u>Temp HighPassFilter</u></div>
<svg class="a" style="left:165px;top:627px;" width="10" height="10" viewBox="0 0 10 10"><path d="M4.5 0.5 L0.8 4.5 L4.5 8.5 M8.5 0.5 L4.8 4.5 L8.5 8.5" stroke="#444" stroke-width="1.3" fill="none"/></svg>
<svg class="a" style="left:603px;top:627px;" width="10" height="10" viewBox="0 0 10 10"><path d="M4.5 0.5 L0.8 4.5 L4.5 8.5 M8.5 0.5 L4.8 4.5 L8.5 8.5" stroke="#444" stroke-width="1.3" fill="none"/></svg>
<div class="a" style="left:614px;top:55px;width:1943px;height:62px;background:#f4f4f4"></div>
<div class="a" style="left:614px;top:116px;width:1943px;height:1px;background:#e2e2e2"></div>
<div class="a" style="left:628px;top:62px;width:62px;height:47px;background:#007960;border-radius:6px"></div>
<svg class="a" style="left:635px;top:73px;" width="26" height="25" viewBox="0 0 26 25"><path d="M2 0.5 V22 H25" stroke="#fff" stroke-width="3.6" fill="none"/><path d="M4.6 16.6 L9.6 10.7 L13.1 14.3 L18.1 2.8 L21.3 17.2 L22.8 9.6" stroke="#fff" stroke-width="1.7" fill="none"/></svg>
<svg class="a" style="left:666px;top:82px;" width="17" height="11" viewBox="0 0 17 11"><path d="M1.2 2.3 L8.5 9.4 L15.3 2" stroke="#dcdcdc" stroke-width="3.4" fill="none"/></svg>
<div class="a" style="left:697px;top:63px;width:68px;height:45px;background:#ebebeb;box-shadow:inset 0 1px 3px rgba(0,0,0,0.12);border-radius:2px"></div>
<svg class="a" style="left:722px;top:68px;" width="18" height="20" viewBox="0 0 18 20"><rect x="1" y="3.4" width="16.2" height="15.6" rx="1.3" stroke="#333" stroke-width="1.4" fill="#fff"/><rect x="1" y="3.4" width="16.2" height="2.6" fill="#333"/><rect x="3.4" y="0.6" width="2.6" height="5" rx="1.3" stroke="#333" stroke-width="1" fill="#fff"/><rect x="11.2" y="0.6" width="2.6" height="5" rx="1.3" stroke="#333" stroke-width="1" fill="#fff"/><path d="M4.9 6 V19 M9.1 6 V19 M13.3 6 V19" stroke="#444" stroke-width="1"/><path d="M1 10.5 H17 M1 14.8 H17" stroke="#bbb" stroke-width="0.7"/></svg>
<div class="t " style="left:707.8px;top:90.3px;font-size:12px;color:#333;font-weight:normal;transform-origin:0 0;transform:scaleX(0.969);">Calendar</div>
<svg class="a" style="left:782px;top:68px;" width="18" height="18" viewBox="0 0 18 18"><rect x="-4.6" y="-3" width="9.2" height="6" rx="2.8" transform="translate(5.2 5.6) rotate(45)" stroke="#333" stroke-width="1.9" fill="none"/><rect x="-4.6" y="-3" width="9.2" height="6" rx="2.8" transform="translate(13 12.9) rotate(45)" stroke="#333" stroke-width="1.9" fill="none"/><path d="M8 8.5 L10.3 10.6" stroke="#333" stroke-width="1.6"/></svg>
<div class="t " style="left:776.5px;top:90.3px;font-size:12px;color:#333;font-weight:normal;transform-origin:0 0;transform:scaleX(0.941);">Chain</div>
<svg class="a" style="left:839px;top:71px;" width="19" height="16" viewBox="0 0 19 16"><rect x="0" y="0" width="19" height="4" rx="1" fill="#333"/><rect x="0" y="6" width="19" height="4" rx="1" fill="#333"/><rect x="0" y="12" width="19" height="4" rx="1" fill="#333"/><rect x="13" y="1" width="5" height="2" fill="#bbb"/><rect x="6" y="7" width="12" height="2" fill="#bbb"/><rect x="10" y="13" width="8" height="2" fill="#bbb"/></svg>
<div class="t " style="left:827.8px;top:90.3px;font-size:12px;color:#333;font-weight:normal;transform-origin:0 0;transform:scaleX(0.940);">Capsule</div>
<div class="a" style="left:888px;top:63px;width:1px;height:46px;background:#ddd"></div>
<svg class="a" style="left:915px;top:69px;" width="39" height="20" viewBox="0 0 39 20"><path d="M3.5 19 L3.5 3 M0.5 6 L3.5 1 L6.5 6" stroke="#333" stroke-width="2.2" fill="none"/><path d="M10 1 L10 17 M7 14 L10 19 L13 14" stroke="#333" stroke-width="2.2" fill="none"/><path d="M17 1 L17 16.6 L38 16.6" stroke="#666" stroke-width="1.4" fill="none"/><path d="M19.5 13.8 L25 8.3 L28 11.3 L34.2 5.1" stroke="#333" stroke-width="2.4" fill="none"/><path d="M31.2 2.6 L36.6 2.1 L36.1 7.5Z" fill="#333"/></svg>
<div class="t " style="left:908.7px;top:90.3px;font-size:12px;color:#333;font-weight:normal;transform-origin:0 0;transform:scaleX(0.918);">One Lane</div>
<svg class="a" style="left:987px;top:69px;" width="39" height="20" viewBox="0 0 39 20"><path d="M3.5 19 L3.5 3 M0.5 6 L3.5 1 L6.5 6" stroke="#333" stroke-width="2.2" fill="none"/><path d="M10 1 L10 17 M7 14 L10 19 L13 14" stroke="#333" stroke-width="2.2" fill="none"/><path d="M17 1 L17 16.6 L38 16.6" stroke="#666" stroke-width="1.4" fill="none"/><path d="M19.5 13.8 L25 8.3 L28 11.3 L34.2 5.1" stroke="#333" stroke-width="2.4" fill="none"/><path d="M31.2 2.6 L36.6 2.1 L36.1 7.5Z" fill="#333"/></svg>
<div class="t " style="left:979.0px;top:90.3px;font-size:12px;color:#333;font-weight:normal;transform-origin:0 0;transform:scaleX(0.893);">One Y-Axis</div>
<svg class="a" style="left:1057px;top:69px;" width="34" height="20" viewBox="0 0 34 20"><path d="M4 3 L4 17 M0.5 5.5 L4 1 L7.5 5.5 M0.5 14.5 L4 19 L7.5 14.5" stroke="#333" stroke-width="2.2" fill="none"/><path d="M12 1 L12 16.6 L33 16.6" stroke="#666" stroke-width="1.4" fill="none"/><path d="M14.5 13.8 L20 8.3 L23 11.3 L29.2 5.1" stroke="#333" stroke-width="2.4" fill="none"/><path d="M26.2 2.6 L31.6 2.1 L31.1 7.5Z" fill="#333"/></svg>
<div class="t " style="left:1053.9px;top:90.3px;font-size:12px;color:#333;font-weight:normal;transform-origin:0 0;transform:scaleX(0.938);">Spread</div>
<svg class="a" style="left:1116px;top:69px;" width="26" height="19" viewBox="0 0 26 19"><path d="M0 2 L0 8 L10 18 L18 10 L8 0 L2 0Z" fill="#333"/><circle cx="3.5" cy="3.5" r="1.5" fill="#f4f4f4"/><path d="M20 9 L26 9 L23 12Z" fill="#333"/></svg>
<div class="t " style="left:1112.5px;top:90.3px;font-size:12px;color:#333;font-weight:normal;transform-origin:0 0;transform:scaleX(0.950);">Labels</div>
<div class="a" style="left:1165px;top:63px;width:1px;height:46px;background:#ddd"></div>
<svg class="a" style="left:1188px;top:69px;" width="29" height="18" viewBox="0 0 29 18"><path d="M0.9 12.8 L4.6 0.6 L7.4 12.2" stroke="#333" stroke-width="1.9" fill="none"/><circle cx="11.1" cy="4.3" r="0.85" fill="#333"/><circle cx="11.6" cy="7.6" r="0.85" fill="#333"/><circle cx="12.5" cy="11.3" r="0.85" fill="#333"/><circle cx="13" cy="15.5" r="0.85" fill="#333"/><circle cx="15.3" cy="11.8" r="0.85" fill="#333"/><circle cx="18.6" cy="14.6" r="0.85" fill="#333"/><path d="M21.9 10.4 H27.9 L24.9 14.4Z" fill="#333"/></svg>
<div class="t " style="left:1179.3px;top:91.3px;font-size:12px;color:#333;font-weight:normal;transform-origin:0 0;transform:scaleX(0.993);">Dimming</div>
<div class="a" style="left:1245px;top:63px;width:1px;height:46px;background:#ddd"></div>
<svg class="a" style="left:1265px;top:69px;" width="18" height="18" viewBox="0 0 18 18"><circle cx="7.5" cy="7.5" r="6" stroke="#aaa" stroke-width="1.8" fill="none"/><path d="M7.5 4.5 L7.5 10.5 M4.5 7.5 L10.5 7.5" stroke="#aaa" stroke-width="1.4"/><path d="M12 12 L17 17" stroke="#aaa" stroke-width="2.4"/></svg>
<div class="t " style="left:1258.9px;top:90.3px;font-size:12px;color:#aaa;font-weight:normal;transform-origin:0 0;transform:scaleX(0.981);">Zoom</div>
<svg class="a" style="left:1308px;top:68px;" width="28" height="18" viewBox="0 0 28 18"><path d="M4.8 8 H2.6 Q1 8 1 9.6 V15.4 Q1 17 2.6 17 H16.4 Q18 17 18 15.4 V9.6 Q18 8 16.4 8 H14.2" stroke="#333" stroke-width="1.7" fill="none"/><path d="M9.5 13.4 V3.5" stroke="#333" stroke-width="2.1"/><path d="M5.3 5.4 L9.5 0.2 L13.7 5.4Z" fill="#333"/><path d="M21.4 10.9 H27.2 L24.3 14.4Z" fill="#333"/></svg>
<div class="t " style="left:1306.0px;top:90.3px;font-size:12px;color:#333;font-weight:normal;transform-origin:0 0;transform:scaleX(0.951);">Export</div>
<svg class="a" style="left:1370px;top:69px;" width="18" height="16" viewBox="0 0 18 16"><ellipse cx="9" cy="7" rx="8" ry="6" stroke="#aaa" stroke-width="1.5" fill="none"/><path d="M3 12 L1 15.5 L6.5 13" fill="#aaa"/><circle cx="5.5" cy="7" r="1" fill="#aaa"/><circle cx="9" cy="7" r="1" fill="#aaa"/><circle cx="12.5" cy="7" r="1" fill="#aaa"/></svg>
<div class="t " style="left:1355.6px;top:90.3px;font-size:12px;color:#aaa;font-weight:normal;transform-origin:0 0;transform:scaleX(0.985);">Annotate</div>
<svg class="a" style="left:0;top:0" width="2557" height="1206" viewBox="0 0 2557 1206"><path d="M626 471.5 L2535 471.5" stroke="#ccd6eb" stroke-width="1.2"/><path d="M628.0 471 L628.0 483 M654.8 471 L654.8 483 M681.6 471 L681.6 483 M708.5 471 L708.5 483 M735.3 471 L735.3 483 M762.1 471 L762.1 483 M788.9 471 L788.9 483 M815.7 471 L815.7 483 M842.6 471 L842.6 483 M869.4 471 L869.4 483 M896.2 471 L896.2 483 M923.0 471 L923.0 483 M949.8 471 L949.8 483 M976.7 471 L976.7 483 M1003.5 471 L1003.5 483 M1030.3 471 L1030.3 483 M1057.1 471 L1057.1 483 M1083.9 471 L1083.9 483 M1110.8 471 L1110.8 483 M1137.6 471 L1137.6 483 M1164.4 471 L1164.4 483 M1191.2 471 L1191.2 483 M1218.0 471 L1218.0 483 M1244.9 471 L1244.9 483 M1271.7 471 L1271.7 483 M1298.5 471 L1298.5 483 M1325.3 471 L1325.3 483 M1352.1 471 L1352.1 483 M1379.0 471 L1379.0 483 M1405.8 471 L1405.8 483 M1432.6 471 L1432.6 483 M1459.4 471 L1459.4 483 M1486.2 471 L1486.2 483 M1513.1 471 L1513.1 483 M1539.9 471 L1539.9 483 M1566.7 471 L1566.7 483 M1593.5 471 L1593.5 483 M1620.3 471 L1620.3 483 M1647.2 471 L1647.2 483 M1674.0 471 L1674.0 483 M1700.8 471 L1700.8 483 M1727.6 471 L1727.6 483 M1754.4 471 L1754.4 483 M1781.3 471 L1781.3 483 M1808.1 471 L1808.1 483 M1834.9 471 L1834.9 483 M1861.7 471 L1861.7 483 M1888.5 471 L1888.5 483 M1915.4 471 L1915.4 483 M1942.2 471 L1942.2 483 M1969.0 471 L1969.0 483 M1995.8 471 L1995.8 483 M2022.6 471 L2022.6 483 M2049.5 471 L2049.5 483 M2076.3 471 L2076.3 483 M2103.1 471 L2103.1 483 M2129.9 471 L2129.9 483 M2156.7 471 L2156.7 483 M2183.6 471 L2183.6 483 M2210.4 471 L2210.4 483 M2237.2 471 L2237.2 483 M2264.0 471 L2264.0 483 M2290.8 471 L2290.8 483 M2317.7 471 L2317.7 483 M2344.5 471 L2344.5 483 M2371.3 471 L2371.3 483 M2398.1 471 L2398.1 483 M2424.9 471 L2424.9 483 M2451.8 471 L2451.8 483 M2478.6 471 L2478.6 483 M2505.4 471 L2505.4 483 M2532.2 471 L2532.2 483" stroke="#ccd6eb" stroke-width="1"/><defs><path id="fb" d="M628.00 466.7h2.2V470.5h-2.2ZM632.47 467.9h2.2V470.5h-2.2ZM641.41 466.7h2.2V470.5h-2.2ZM645.88 467.9h2.2V470.5h-2.2ZM654.82 466.7h2.2V470.5h-2.2ZM659.29 469.3h2.2V470.5h-2.2ZM663.76 469.3h2.2V470.5h-2.2ZM668.23 469.3h2.2V470.5h-2.2ZM672.70 469.1h2.2V470.5h-2.2ZM677.17 464.4h2.2V470.5h-2.2ZM681.64 467.9h2.2V470.5h-2.2ZM686.11 465.6h2.2V470.5h-2.2ZM690.58 467.9h2.2V470.5h-2.2ZM695.05 460.5h2.2V470.5h-2.2ZM699.52 466.7h2.2V470.5h-2.2ZM703.99 456.8h2.2V470.5h-2.2ZM708.46 461.7h2.2V470.5h-2.2ZM712.93 469.3h2.2V470.5h-2.2ZM717.40 464.4h2.2V470.5h-2.2ZM721.87 457.9h2.2V470.5h-2.2ZM726.34 467.9h2.2V470.5h-2.2ZM730.81 459.4h2.2V470.5h-2.2ZM735.28 467.9h2.2V470.5h-2.2ZM739.75 467.9h2.2V470.5h-2.2ZM744.22 464.4h2.2V470.5h-2.2ZM748.69 465.6h2.2V470.5h-2.2ZM753.16 455.6h2.2V470.5h-2.2ZM762.10 466.7h2.2V470.5h-2.2ZM766.57 467.9h2.2V470.5h-2.2ZM771.04 453.1h2.2V470.5h-2.2ZM775.51 469.3h2.2V470.5h-2.2ZM779.98 449.4h2.2V470.5h-2.2ZM784.45 467.9h2.2V470.5h-2.2ZM788.92 463.2h2.2V470.5h-2.2ZM793.39 453.1h2.2V470.5h-2.2ZM797.86 443.3h2.2V470.5h-2.2ZM802.33 435.5h2.2V470.5h-2.2ZM806.80 442.0h2.2V470.5h-2.2ZM811.27 440.6h2.2V470.5h-2.2ZM815.74 254.5h2.2V470.5h-2.2ZM820.21 193.0h2.2V470.5h-2.2ZM824.68 445.6h2.2V470.5h-2.2ZM829.15 414.5h2.2V470.5h-2.2ZM833.62 455.6h2.2V470.5h-2.2ZM838.09 459.4h2.2V470.5h-2.2ZM842.56 465.6h2.2V470.5h-2.2ZM847.03 460.5h2.2V470.5h-2.2ZM851.50 456.8h2.2V470.5h-2.2ZM855.97 464.4h2.2V470.5h-2.2ZM860.44 453.1h2.2V470.5h-2.2ZM864.91 461.7h2.2V470.5h-2.2ZM869.38 455.6h2.2V470.5h-2.2ZM878.32 445.6h2.2V470.5h-2.2ZM882.79 457.9h2.2V470.5h-2.2ZM887.26 456.8h2.2V470.5h-2.2ZM891.73 466.7h2.2V470.5h-2.2ZM896.20 451.7h2.2V470.5h-2.2ZM905.14 460.5h2.2V470.5h-2.2ZM909.61 459.4h2.2V470.5h-2.2ZM914.08 469.3h2.2V470.5h-2.2ZM918.55 457.0h2.2V470.5h-2.2ZM923.02 463.5h2.2V470.5h-2.2ZM927.49 459.7h2.2V470.5h-2.2ZM931.96 464.4h2.2V470.5h-2.2ZM936.43 450.8h2.2V470.5h-2.2ZM940.90 453.3h2.2V470.5h-2.2ZM945.37 463.2h2.2V470.5h-2.2ZM949.84 469.3h2.2V470.5h-2.2ZM954.31 467.0h2.2V470.5h-2.2ZM958.78 468.2h2.2V470.5h-2.2ZM963.25 465.8h2.2V470.5h-2.2ZM967.72 465.8h2.2V470.5h-2.2ZM976.66 464.4h2.2V470.5h-2.2ZM981.13 458.2h2.2V470.5h-2.2ZM985.60 468.2h2.2V470.5h-2.2ZM990.07 469.3h2.2V470.5h-2.2ZM994.54 467.0h2.2V470.5h-2.2ZM999.01 449.6h2.2V470.5h-2.2ZM1003.48 452.0h2.2V470.5h-2.2ZM1007.95 369.6h2.2V470.5h-2.2ZM1012.42 393.1h2.2V470.5h-2.2ZM1016.89 463.2h2.2V470.5h-2.2ZM1021.36 464.4h2.2V470.5h-2.2ZM1025.83 468.2h2.2V470.5h-2.2ZM1030.30 465.8h2.2V470.5h-2.2ZM1034.77 465.8h2.2V470.5h-2.2ZM1039.24 457.0h2.2V470.5h-2.2ZM1043.71 459.7h2.2V470.5h-2.2ZM1048.18 463.2h2.2V470.5h-2.2ZM1052.65 463.2h2.2V470.5h-2.2ZM1057.12 463.2h2.2V470.5h-2.2ZM1061.59 462.1h2.2V470.5h-2.2ZM1066.06 464.4h2.2V470.5h-2.2ZM1070.53 460.9h2.2V470.5h-2.2ZM1075.00 468.2h2.2V470.5h-2.2ZM1079.47 464.4h2.2V470.5h-2.2ZM1083.94 462.1h2.2V470.5h-2.2ZM1088.41 460.9h2.2V470.5h-2.2ZM1092.88 463.2h2.2V470.5h-2.2ZM1097.35 464.4h2.2V470.5h-2.2ZM1101.82 458.5h2.2V470.5h-2.2ZM1106.29 469.3h2.2V470.5h-2.2ZM1110.76 464.4h2.2V470.5h-2.2ZM1115.23 465.8h2.2V470.5h-2.2ZM1119.70 460.9h2.2V470.5h-2.2ZM1124.17 457.0h2.2V470.5h-2.2ZM1128.64 464.4h2.2V470.5h-2.2ZM1133.11 463.2h2.2V470.5h-2.2ZM1137.58 465.8h2.2V470.5h-2.2ZM1142.05 460.9h2.2V470.5h-2.2ZM1146.52 464.4h2.2V470.5h-2.2ZM1150.99 460.9h2.2V470.5h-2.2ZM1155.46 464.4h2.2V470.5h-2.2ZM1159.93 467.0h2.2V470.5h-2.2ZM1164.40 469.3h2.2V470.5h-2.2ZM1168.87 459.7h2.2V470.5h-2.2ZM1173.34 457.0h2.2V470.5h-2.2ZM1177.81 454.7h2.2V470.5h-2.2ZM1182.28 467.0h2.2V470.5h-2.2ZM1186.75 463.2h2.2V470.5h-2.2ZM1191.22 458.5h2.2V470.5h-2.2ZM1195.69 468.2h2.2V470.5h-2.2ZM1200.16 431.8h2.2V470.5h-2.2ZM1204.63 453.3h2.2V470.5h-2.2ZM1209.10 454.7h2.2V470.5h-2.2ZM1213.57 464.4h2.2V470.5h-2.2ZM1218.04 462.1h2.2V470.5h-2.2ZM1222.51 465.8h2.2V470.5h-2.2ZM1226.98 460.9h2.2V470.5h-2.2ZM1231.45 454.7h2.2V470.5h-2.2ZM1235.92 464.4h2.2V470.5h-2.2ZM1240.39 458.2h2.2V470.5h-2.2ZM1244.86 468.2h2.2V470.5h-2.2ZM1249.33 463.2h2.2V470.5h-2.2ZM1253.80 465.8h2.2V470.5h-2.2ZM1258.27 463.2h2.2V470.5h-2.2ZM1262.74 464.4h2.2V470.5h-2.2ZM1271.68 459.7h2.2V470.5h-2.2ZM1276.15 462.1h2.2V470.5h-2.2ZM1280.62 464.4h2.2V470.5h-2.2ZM1285.09 465.8h2.2V470.5h-2.2ZM1289.56 468.2h2.2V470.5h-2.2ZM1294.03 469.3h2.2V470.5h-2.2ZM1298.50 463.2h2.2V470.5h-2.2ZM1302.97 463.2h2.2V470.5h-2.2ZM1307.44 467.0h2.2V470.5h-2.2ZM1311.91 460.9h2.2V470.5h-2.2ZM1316.38 459.7h2.2V470.5h-2.2ZM1320.85 465.8h2.2V470.5h-2.2ZM1325.32 465.8h2.2V470.5h-2.2ZM1329.79 464.4h2.2V470.5h-2.2ZM1334.26 460.9h2.2V470.5h-2.2ZM1338.73 464.4h2.2V470.5h-2.2ZM1343.20 463.2h2.2V470.5h-2.2ZM1347.67 459.7h2.2V470.5h-2.2ZM1352.14 465.8h2.2V470.5h-2.2ZM1356.61 468.2h2.2V470.5h-2.2ZM1361.08 465.8h2.2V470.5h-2.2ZM1365.55 460.9h2.2V470.5h-2.2ZM1370.02 458.2h2.2V470.5h-2.2ZM1374.49 467.0h2.2V470.5h-2.2ZM1378.96 467.0h2.2V470.5h-2.2ZM1383.43 465.8h2.2V470.5h-2.2ZM1387.90 458.2h2.2V470.5h-2.2ZM1392.37 444.5h2.2V470.5h-2.2ZM1396.84 464.4h2.2V470.5h-2.2ZM1401.31 463.2h2.2V470.5h-2.2ZM1405.78 465.8h2.2V470.5h-2.2ZM1414.72 469.3h2.2V470.5h-2.2ZM1419.19 469.3h2.2V470.5h-2.2ZM1423.66 467.0h2.2V470.5h-2.2ZM1428.13 468.2h2.2V470.5h-2.2ZM1432.60 469.3h2.2V470.5h-2.2ZM1446.01 469.3h2.2V470.5h-2.2ZM1450.48 468.2h2.2V470.5h-2.2ZM1454.95 465.8h2.2V470.5h-2.2ZM1459.42 469.3h2.2V470.5h-2.2ZM1463.89 469.3h2.2V470.5h-2.2ZM1468.36 468.2h2.2V470.5h-2.2ZM1472.83 468.2h2.2V470.5h-2.2ZM1477.30 468.2h2.2V470.5h-2.2ZM1486.24 467.0h2.2V470.5h-2.2ZM1490.71 464.4h2.2V470.5h-2.2ZM1495.18 464.4h2.2V470.5h-2.2ZM1499.65 467.0h2.2V470.5h-2.2ZM1504.12 467.0h2.2V470.5h-2.2ZM1513.06 465.2h2.2V470.5h-2.2ZM1517.53 465.2h2.2V470.5h-2.2ZM1522.00 468.7h2.2V470.5h-2.2ZM1526.47 469.3h2.2V470.5h-2.2ZM1530.94 462.9h2.2V470.5h-2.2ZM1535.41 467.0h2.2V470.5h-2.2ZM1539.88 462.6h2.2V470.5h-2.2ZM1544.35 467.3h2.2V470.5h-2.2ZM1548.82 465.8h2.2V470.5h-2.2ZM1553.29 462.9h2.2V470.5h-2.2ZM1557.76 464.0h2.2V470.5h-2.2ZM1562.23 464.0h2.2V470.5h-2.2ZM1566.70 467.6h2.2V470.5h-2.2ZM1571.17 467.0h2.2V470.5h-2.2ZM1575.64 462.6h2.2V470.5h-2.2ZM1580.11 469.3h2.2V470.5h-2.2ZM1584.58 464.4h2.2V470.5h-2.2ZM1589.05 468.2h2.2V470.5h-2.2ZM1593.52 467.3h2.2V470.5h-2.2ZM1597.99 462.9h2.2V470.5h-2.2ZM1602.46 459.4h2.2V470.5h-2.2ZM1606.93 465.5h2.2V470.5h-2.2ZM1611.40 460.5h2.2V470.5h-2.2ZM1615.87 468.2h2.2V470.5h-2.2ZM1620.34 468.7h2.2V470.5h-2.2ZM1624.81 468.2h2.2V470.5h-2.2ZM1633.75 465.5h2.2V470.5h-2.2ZM1638.22 465.5h2.2V470.5h-2.2ZM1642.69 467.3h2.2V470.5h-2.2ZM1647.16 461.7h2.2V470.5h-2.2ZM1651.63 465.5h2.2V470.5h-2.2ZM1656.10 465.5h2.2V470.5h-2.2ZM1660.57 468.2h2.2V470.5h-2.2ZM1665.04 465.5h2.2V470.5h-2.2ZM1673.98 466.4h2.2V470.5h-2.2ZM1678.45 466.4h2.2V470.5h-2.2ZM1682.92 465.5h2.2V470.5h-2.2ZM1687.39 468.2h2.2V470.5h-2.2ZM1696.33 469.3h2.2V470.5h-2.2ZM1700.80 469.3h2.2V470.5h-2.2ZM1705.27 464.4h2.2V470.5h-2.2ZM1709.74 465.5h2.2V470.5h-2.2ZM1714.21 465.5h2.2V470.5h-2.2ZM1718.68 468.2h2.2V470.5h-2.2ZM1723.15 462.9h2.2V470.5h-2.2ZM1727.62 467.3h2.2V470.5h-2.2ZM1732.09 469.3h2.2V470.5h-2.2ZM1736.56 464.4h2.2V470.5h-2.2ZM1741.03 469.3h2.2V470.5h-2.2ZM1745.50 465.5h2.2V470.5h-2.2ZM1749.97 468.2h2.2V470.5h-2.2ZM1754.44 464.4h2.2V470.5h-2.2ZM1758.91 469.3h2.2V470.5h-2.2ZM1763.38 468.2h2.2V470.5h-2.2ZM1767.85 462.9h2.2V470.5h-2.2ZM1776.79 467.0h2.2V470.5h-2.2ZM1785.73 469.3h2.2V470.5h-2.2ZM1790.20 464.4h2.2V470.5h-2.2ZM1794.67 462.9h2.2V470.5h-2.2ZM1799.14 467.0h2.2V470.5h-2.2ZM1808.08 465.2h2.2V470.5h-2.2ZM1812.55 467.6h2.2V470.5h-2.2ZM1817.02 467.3h2.2V470.5h-2.2ZM1821.49 469.3h2.2V470.5h-2.2ZM1830.43 468.2h2.2V470.5h-2.2ZM1834.90 467.3h2.2V470.5h-2.2ZM1839.37 468.2h2.2V470.5h-2.2ZM1843.84 469.3h2.2V470.5h-2.2ZM1852.78 464.4h2.2V470.5h-2.2ZM1857.25 467.0h2.2V470.5h-2.2ZM1861.72 465.5h2.2V470.5h-2.2ZM1866.19 468.2h2.2V470.5h-2.2ZM1870.66 467.3h2.2V470.5h-2.2ZM1875.13 469.3h2.2V470.5h-2.2ZM1879.60 469.3h2.2V470.5h-2.2ZM1884.07 468.2h2.2V470.5h-2.2ZM1888.54 469.3h2.2V470.5h-2.2ZM1893.01 469.3h2.2V470.5h-2.2ZM1897.48 462.9h2.2V470.5h-2.2ZM1901.95 467.0h2.2V470.5h-2.2ZM1906.42 464.4h2.2V470.5h-2.2ZM1910.89 469.3h2.2V470.5h-2.2ZM1915.36 467.0h2.2V470.5h-2.2ZM1919.83 469.3h2.2V470.5h-2.2ZM1924.30 468.2h2.2V470.5h-2.2ZM1928.77 468.2h2.2V470.5h-2.2ZM1933.24 468.2h2.2V470.5h-2.2ZM1937.71 465.5h2.2V470.5h-2.2ZM1942.18 469.3h2.2V470.5h-2.2ZM1946.65 468.2h2.2V470.5h-2.2ZM1951.12 464.4h2.2V470.5h-2.2ZM1955.59 465.5h2.2V470.5h-2.2ZM1960.06 467.3h2.2V470.5h-2.2ZM1964.53 469.3h2.2V470.5h-2.2ZM1969.00 468.2h2.2V470.5h-2.2ZM1977.94 469.3h2.2V470.5h-2.2ZM1982.41 469.3h2.2V470.5h-2.2ZM1986.88 467.3h2.2V470.5h-2.2ZM1991.35 464.4h2.2V470.5h-2.2ZM1995.82 469.3h2.2V470.5h-2.2ZM2000.29 468.2h2.2V470.5h-2.2ZM2004.76 468.2h2.2V470.5h-2.2ZM2009.23 465.5h2.2V470.5h-2.2ZM2013.70 465.5h2.2V470.5h-2.2ZM2018.17 468.2h2.2V470.5h-2.2ZM2022.64 469.3h2.2V470.5h-2.2ZM2027.11 469.3h2.2V470.5h-2.2ZM2031.58 468.2h2.2V470.5h-2.2ZM2036.05 469.3h2.2V470.5h-2.2ZM2040.52 469.3h2.2V470.5h-2.2ZM2044.99 465.5h2.2V470.5h-2.2ZM2049.46 469.3h2.2V470.5h-2.2ZM2053.93 467.0h2.2V470.5h-2.2ZM2058.40 467.3h2.2V470.5h-2.2ZM2062.87 468.2h2.2V470.5h-2.2ZM2071.81 469.3h2.2V470.5h-2.2ZM2076.28 467.3h2.2V470.5h-2.2ZM2080.75 469.3h2.2V470.5h-2.2ZM2089.69 465.5h2.2V470.5h-2.2ZM2094.16 467.3h2.2V470.5h-2.2ZM2098.63 467.3h2.2V470.5h-2.2ZM2107.57 469.3h2.2V470.5h-2.2ZM2112.04 468.2h2.2V470.5h-2.2ZM2120.98 468.2h2.2V470.5h-2.2ZM2125.45 468.2h2.2V470.5h-2.2ZM2129.92 468.2h2.2V470.5h-2.2ZM2134.39 467.3h2.2V470.5h-2.2ZM2138.86 469.3h2.2V470.5h-2.2ZM2147.80 467.0h2.2V470.5h-2.2ZM2152.27 468.2h2.2V470.5h-2.2ZM2165.68 467.0h2.2V470.5h-2.2ZM2170.15 468.2h2.2V470.5h-2.2ZM2179.09 469.3h2.2V470.5h-2.2ZM2183.56 467.3h2.2V470.5h-2.2ZM2188.03 469.3h2.2V470.5h-2.2ZM2196.97 464.4h2.2V470.5h-2.2ZM2201.44 467.0h2.2V470.5h-2.2ZM2210.38 464.4h2.2V470.5h-2.2ZM2214.85 464.4h2.2V470.5h-2.2ZM2219.32 468.2h2.2V470.5h-2.2ZM2223.79 467.3h2.2V470.5h-2.2ZM2228.26 467.3h2.2V470.5h-2.2ZM2237.20 467.3h2.2V470.5h-2.2ZM2241.67 469.3h2.2V470.5h-2.2ZM2246.14 465.5h2.2V470.5h-2.2ZM2250.61 462.9h2.2V470.5h-2.2ZM2255.08 469.3h2.2V470.5h-2.2ZM2259.55 468.2h2.2V470.5h-2.2ZM2264.02 469.3h2.2V470.5h-2.2ZM2268.49 465.5h2.2V470.5h-2.2ZM2272.96 469.3h2.2V470.5h-2.2ZM2277.43 467.3h2.2V470.5h-2.2ZM2281.90 469.3h2.2V470.5h-2.2ZM2286.37 469.3h2.2V470.5h-2.2ZM2295.31 468.2h2.2V470.5h-2.2ZM2299.78 468.2h2.2V470.5h-2.2ZM2304.25 467.3h2.2V470.5h-2.2ZM2313.19 467.3h2.2V470.5h-2.2ZM2317.66 468.2h2.2V470.5h-2.2ZM2322.13 469.3h2.2V470.5h-2.2ZM2326.60 468.2h2.2V470.5h-2.2ZM2331.07 465.5h2.2V470.5h-2.2ZM2340.01 469.3h2.2V470.5h-2.2ZM2344.48 467.0h2.2V470.5h-2.2ZM2348.95 467.3h2.2V470.5h-2.2ZM2353.42 468.2h2.2V470.5h-2.2ZM2357.89 465.5h2.2V470.5h-2.2ZM2366.83 467.3h2.2V470.5h-2.2ZM2371.30 469.3h2.2V470.5h-2.2ZM2384.71 468.2h2.2V470.5h-2.2ZM2389.18 467.3h2.2V470.5h-2.2ZM2393.65 469.3h2.2V470.5h-2.2ZM2398.12 465.3h2.2V470.5h-2.2ZM2402.59 465.3h2.2V470.5h-2.2ZM2407.06 467.9h2.2V470.5h-2.2ZM2411.53 469.2h2.2V470.5h-2.2ZM2416.00 467.9h2.2V470.5h-2.2ZM2420.47 469.2h2.2V470.5h-2.2ZM2424.94 467.9h2.2V470.5h-2.2ZM2429.41 466.3h2.2V470.5h-2.2ZM2433.88 466.3h2.2V470.5h-2.2ZM2438.35 465.3h2.2V470.5h-2.2ZM2442.82 467.9h2.2V470.5h-2.2ZM2447.29 467.9h2.2V470.5h-2.2ZM2451.76 469.2h2.2V470.5h-2.2ZM2456.23 469.2h2.2V470.5h-2.2ZM2460.70 466.6h2.2V470.5h-2.2ZM2465.17 464.0h2.2V470.5h-2.2ZM2469.64 469.2h2.2V470.5h-2.2ZM2474.11 467.9h2.2V470.5h-2.2ZM2478.58 467.9h2.2V470.5h-2.2ZM2483.05 466.3h2.2V470.5h-2.2ZM2487.52 469.2h2.2V470.5h-2.2ZM2496.46 469.2h2.2V470.5h-2.2ZM2500.93 469.2h2.2V470.5h-2.2ZM2505.40 465.3h2.2V470.5h-2.2ZM2509.87 466.3h2.2V470.5h-2.2ZM2518.81 464.0h2.2V470.5h-2.2ZM2527.75 466.3h2.2V470.5h-2.2Z"/></defs><use href="#fb" fill="#3b4fa3"/><g font-family="Liberation Sans" font-size="13.5" fill="#858c93"><text transform="translate(631.5 491) rotate(-45) scale(1.13 1)" text-anchor="end">0</text><text transform="translate(658.3 491) rotate(-45) scale(1.13 1)" text-anchor="end">7.1111</text><text transform="translate(685.1 491) rotate(-45) scale(1.13 1)" text-anchor="end">3.5556</text><text transform="translate(712.0 491) rotate(-45) scale(1.13 1)" text-anchor="end">2.3704</text><text transform="translate(738.8 491) rotate(-45) scale(1.13 1)" text-anchor="end">1.7778</text><text transform="translate(765.6 491) rotate(-45) scale(1.13 1)" text-anchor="end">1.4222</text><text transform="translate(792.4 491) rotate(-45) scale(1.13 1)" text-anchor="end">1.1852</text><text transform="translate(819.2 491) rotate(-45) scale(1.13 1)" text-anchor="end">1.0159</text><text transform="translate(846.1 491) rotate(-45) scale(1.13 1)" text-anchor="end">0.8889</text><text transform="translate(872.9 491) rotate(-45) scale(1.13 1)" text-anchor="end">0.7901</text><text transform="translate(899.7 491) rotate(-45) scale(1.13 1)" text-anchor="end">0.7111</text><text transform="translate(926.5 491) rotate(-45) scale(1.13 1)" text-anchor="end">0.6465</text><text transform="translate(953.3 491) rotate(-45) scale(1.13 1)" text-anchor="end">0.5926</text><text transform="translate(980.2 491) rotate(-45) scale(1.13 1)" text-anchor="end">0.547</text><text transform="translate(1007.0 491) rotate(-45) scale(1.13 1)" text-anchor="end">0.5079</text><text transform="translate(1033.8 491) rotate(-45) scale(1.13 1)" text-anchor="end">0.4741</text><text transform="translate(1060.6 491) rotate(-45) scale(1.13 1)" text-anchor="end">0.4444</text><text transform="translate(1087.4 491) rotate(-45) scale(1.13 1)" text-anchor="end">0.4183</text><text transform="translate(1114.3 491) rotate(-45) scale(1.13 1)" text-anchor="end">0.3951</text><text transform="translate(1141.1 491) rotate(-45) scale(1.13 1)" text-anchor="end">0.3743</text><text transform="translate(1167.9 491) rotate(-45) scale(1.13 1)" text-anchor="end">0.3556</text><text transform="translate(1194.7 491) rotate(-45) scale(1.13 1)" text-anchor="end">0.3386</text><text transform="translate(1221.5 491) rotate(-45) scale(1.13 1)" text-anchor="end">0.3232</text><text transform="translate(1248.4 491) rotate(-45) scale(1.13 1)" text-anchor="end">0.3092</text><text transform="translate(1275.2 491) rotate(-45) scale(1.13 1)" text-anchor="end">0.2963</text><text transform="translate(1302.0 491) rotate(-45) scale(1.13 1)" text-anchor="end">0.2844</text><text transform="translate(1328.8 491) rotate(-45) scale(1.13 1)" text-anchor="end">0.2735</text><text transform="translate(1355.6 491) rotate(-45) scale(1.13 1)" text-anchor="end">0.2634</text><text transform="translate(1382.5 491) rotate(-45) scale(1.13 1)" text-anchor="end">0.254</text><text transform="translate(1409.3 491) rotate(-45) scale(1.13 1)" text-anchor="end">0.2452</text><text transform="translate(1436.1 491) rotate(-45) scale(1.13 1)" text-anchor="end">0.237</text><text transform="translate(1462.9 491) rotate(-45) scale(1.13 1)" text-anchor="end">0.2294</text><text transform="translate(1489.7 491) rotate(-45) scale(1.13 1)" text-anchor="end">0.2222</text><text transform="translate(1516.6 491) rotate(-45) scale(1.13 1)" text-anchor="end">0.2155</text><text transform="translate(1543.4 491) rotate(-45) scale(1.13 1)" text-anchor="end">0.2092</text><text transform="translate(1570.2 491) rotate(-45) scale(1.13 1)" text-anchor="end">0.2032</text><text transform="translate(1597.0 491) rotate(-45) scale(1.13 1)" text-anchor="end">0.1975</text><text transform="translate(1623.8 491) rotate(-45) scale(1.13 1)" text-anchor="end">0.1922</text><text transform="translate(1650.7 491) rotate(-45) scale(1.13 1)" text-anchor="end">0.1871</text><text transform="translate(1677.5 491) rotate(-45) scale(1.13 1)" text-anchor="end">0.1823</text><text transform="translate(1704.3 491) rotate(-45) scale(1.13 1)" text-anchor="end">0.1778</text><text transform="translate(1731.1 491) rotate(-45) scale(1.13 1)" text-anchor="end">0.1734</text><text transform="translate(1757.9 491) rotate(-45) scale(1.13 1)" text-anchor="end">0.1693</text><text transform="translate(1784.8 491) rotate(-45) scale(1.13 1)" text-anchor="end">0.1654</text><text transform="translate(1811.6 491) rotate(-45) scale(1.13 1)" text-anchor="end">0.1616</text><text transform="translate(1838.4 491) rotate(-45) scale(1.13 1)" text-anchor="end">0.158</text><text transform="translate(1865.2 491) rotate(-45) scale(1.13 1)" text-anchor="end">0.1546</text><text transform="translate(1892.0 491) rotate(-45) scale(1.13 1)" text-anchor="end">0.1513</text><text transform="translate(1918.9 491) rotate(-45) scale(1.13 1)" text-anchor="end">0.1482</text><text transform="translate(1945.7 491) rotate(-45) scale(1.13 1)" text-anchor="end">0.1451</text><text transform="translate(1972.5 491) rotate(-45) scale(1.13 1)" text-anchor="end">0.1422</text><text transform="translate(1999.3 491) rotate(-45) scale(1.13 1)" text-anchor="end">0.1394</text><text transform="translate(2026.1 491) rotate(-45) scale(1.13 1)" text-anchor="end">0.1368</text><text transform="translate(2053.0 491) rotate(-45) scale(1.13 1)" text-anchor="end">0.1342</text><text transform="translate(2079.8 491) rotate(-45) scale(1.13 1)" text-anchor="end">0.1317</text><text transform="translate(2106.6 491) rotate(-45) scale(1.13 1)" text-anchor="end">0.1293</text><text transform="translate(2133.4 491) rotate(-45) scale(1.13 1)" text-anchor="end">0.127</text><text transform="translate(2160.2 491) rotate(-45) scale(1.13 1)" text-anchor="end">0.1248</text><text transform="translate(2187.1 491) rotate(-45) scale(1.13 1)" text-anchor="end">0.1226</text><text transform="translate(2213.9 491) rotate(-45) scale(1.13 1)" text-anchor="end">0.1205</text><text transform="translate(2240.7 491) rotate(-45) scale(1.13 1)" text-anchor="end">0.1185</text><text transform="translate(2267.5 491) rotate(-45) scale(1.13 1)" text-anchor="end">0.1166</text><text transform="translate(2294.3 491) rotate(-45) scale(1.13 1)" text-anchor="end">0.1147</text><text transform="translate(2321.2 491) rotate(-45) scale(1.13 1)" text-anchor="end">0.1129</text><text transform="translate(2348.0 491) rotate(-45) scale(1.13 1)" text-anchor="end">0.1111</text><text transform="translate(2374.8 491) rotate(-45) scale(1.13 1)" text-anchor="end">0.1094</text><text transform="translate(2401.6 491) rotate(-45) scale(1.13 1)" text-anchor="end">0.1077</text><text transform="translate(2428.4 491) rotate(-45) scale(1.13 1)" text-anchor="end">0.1061</text><text transform="translate(2455.3 491) rotate(-45) scale(1.13 1)" text-anchor="end">0.1046</text><text transform="translate(2482.1 491) rotate(-45) scale(1.13 1)" text-anchor="end">0.1031</text><text transform="translate(2508.9 491) rotate(-45) scale(1.13 1)" text-anchor="end">0.1016</text><text transform="translate(2535.7 491) rotate(-45) scale(1.13 1)" text-anchor="end">0.1002</text></g><text x="2298.3" y="160.6" textLength="218.3" lengthAdjust="spacingAndGlyphs" font-family="Liberation Sans" font-size="15.5" fill="#3f51a5">Temp HighPassFilter FFT (day)</text><rect x="647" y="546" width="1895" height="382" fill="#f9f9f9"/><path d="M646 545 L646 929" stroke="#2f9a64" stroke-width="2"/><path d="M646 929 L2542 929" stroke="#dfe5ef" stroke-width="1.5"/><text x="640" y="610.5" text-anchor="end" font-family="Liberation Sans" font-size="14" fill="#2a9270" letter-spacing="0.9">10</text><text x="640" y="684.5" text-anchor="end" font-family="Liberation Sans" font-size="14" fill="#2a9270" letter-spacing="0.9">5</text><text x="640" y="758.5" text-anchor="end" font-family="Liberation Sans" font-size="14" fill="#2a9270" letter-spacing="0.9">0</text><text x="640" y="832.5" text-anchor="end" font-family="Liberation Sans" font-size="14" fill="#2a9270" letter-spacing="0.9">-5</text><text x="640" y="906.5" text-anchor="end" font-family="Liberation Sans" font-size="14" fill="#2a9270" letter-spacing="0.9">-10</text><defs><path id="wv" d="M646.0 782.4 L648.4 780.9 L653.4 806.3 L656.4 813.7 L663.9 869.0 L666.9 813.7 L669.0 827.2 L674.3 715.2 L677.3 688.4 L679.7 694.3 L684.8 646.6 L687.2 640.6 L690.1 669.9 L692.5 669.0 L695.2 691.3 L698.2 749.6 L701.2 760.6 L705.7 763.0 L711.0 781.5 L713.1 780.9 L718.2 806.3 L720.6 810.7 L726.6 842.1 L729.0 779.4 L731.6 769.0 L734.0 706.3 L737.0 692.8 L739.4 585.4 L742.1 580.3 L744.5 780.9 L747.5 731.6 L749.9 722.7 L751.9 727.2 L755.8 741.5 L757.9 745.1 L760.9 756.4 L763.0 758.5 L765.4 795.8 L767.8 798.8 L770.4 815.2 L773.4 803.3 L775.8 815.2 L780.9 770.4 L783.9 798.8 L786.3 807.8 L788.7 812.2 L791.6 764.5 L793.7 769.0 L796.7 763.0 L799.7 737.6 L801.8 731.6 L804.2 714.6 L807.2 730.1 L809.6 757.0 L811.9 764.5 L814.6 682.4 L817.6 694.3 L822.1 722.7 L827.5 785.4 L833.1 771.9 L835.5 774.3 L838.5 780.9 L843.0 813.7 L846.0 825.7 L851.3 854.0 L854.3 806.3 L857.3 783.9 L859.4 743.6 L861.5 740.6 L863.9 657.0 L866.3 651.0 L869.3 638.2 L871.9 646.6 L874.6 631.6 L876.7 637.0 L879.7 639.1 L882.4 724.2 L885.4 749.6 L887.8 794.3 L890.1 804.8 L893.1 801.2 L895.5 797.3 L898.2 800.3 L900.4 811.3 L903.1 809.3 L905.4 819.1 L908.4 822.7 L911.4 834.6 L913.8 850.1 L916.5 850.1 L921.3 780.9 L924.0 700.3 L926.3 676.4 L928.7 651.0 L931.4 661.5 L934.1 645.1 L936.8 658.5 L939.2 671.0 L941.9 677.9 L944.3 700.3 L947.2 707.8 L949.6 757.0 L952.3 776.4 L955.6 779.4 L960.1 777.9 L963.7 795.8 L967.2 819.7 L971.1 846.6 L975.6 882.4 L978.0 886.0 L981.6 795.8 L984.0 739.1 L986.0 694.3 L988.4 645.1 L991.1 631.6 L993.5 613.1 L996.5 686.9 L998.3 670.4 L1004.0 651.0 L1008.4 721.2 L1012.0 791.3 L1017.4 766.0 L1019.8 789.3 L1022.5 786.9 L1024.9 801.8 L1027.8 816.7 L1031.7 843.6 L1035.3 867.5 L1038.3 894.3 L1041.3 816.7 L1044.3 769.0 L1048.1 706.3 L1050.8 700.3 L1053.8 667.5 L1056.2 679.4 L1058.6 666.0 L1061.3 652.5 L1063.7 633.1 L1066.6 623.3 L1069.0 658.5 L1071.7 755.5 L1074.1 767.5 L1077.1 779.4 L1079.5 785.4 L1082.2 774.3 L1084.6 784.5 L1087.5 813.7 L1090.5 830.1 L1094.4 846.6 L1098.0 854.0 L1100.4 874.9 L1103.4 816.7 L1106.0 798.8 L1109.3 715.2 L1112.9 623.3 L1115.9 625.1 L1118.3 676.4 L1121.0 630.1 L1123.7 649.6 L1126.3 697.3 L1129.3 715.2 L1133.8 776.4 L1136.8 782.4 L1139.8 780.9 L1142.8 786.9 L1146.6 791.3 L1148.7 798.8 L1152.3 816.7 L1152.4 815.2 L1156.0 846.6 L1159.9 885.4 L1162.5 888.4 L1165.5 819.7 L1167.9 755.5 L1170.3 739.1 L1173.0 679.4 L1175.7 643.0 L1178.1 644.5 L1180.7 622.7 L1183.4 655.5 L1185.8 640.6 L1188.2 613.1 L1190.9 643.6 L1193.6 688.4 L1196.3 763.0 L1199.3 788.4 L1202.2 794.3 L1204.3 794.3 L1207.3 807.8 L1209.7 818.2 L1212.7 822.7 L1216.3 837.6 L1219.6 855.5 L1222.5 879.4 L1224.6 883.9 L1229.1 819.7 L1232.7 751.0 L1235.1 715.2 L1237.5 695.8 L1240.1 646.6 L1243.1 578.5 L1246.1 588.4 L1248.5 586.9 L1251.5 604.8 L1253.9 646.6 L1256.0 739.1 L1259.0 769.0 L1261.0 785.4 L1264.0 801.2 L1267.0 798.2 L1270.0 801.8 L1272.4 810.7 L1274.8 828.7 L1276.9 833.1 L1279.6 852.5 L1281.9 858.5 L1284.9 876.4 L1287.3 906.3 L1289.7 831.6 L1292.4 810.7 L1295.1 754.0 L1297.5 674.9 L1300.1 654.9 L1302.8 683.9 L1305.2 643.0 L1307.6 651.0 L1310.6 589.9 L1313.0 592.2 L1315.7 643.6 L1318.7 721.2 L1321.6 774.9 L1324.0 800.3 L1326.7 806.3 L1329.1 798.2 L1332.1 800.3 L1335.7 799.4 L1338.7 798.2 L1341.6 804.2 L1344.6 813.7 L1347.0 834.6 L1349.4 849.6 L1352.1 864.5 L1354.8 851.0 L1357.5 711.6 L1359.9 758.5 L1362.5 622.1 L1364.9 630.1 L1367.9 658.5 L1370.3 613.7 L1372.7 651.9 L1375.4 655.5 L1378.4 688.4 L1380.7 703.3 L1383.4 724.2 L1385.8 766.0 L1388.8 819.7 L1391.2 821.2 L1394.2 804.8 L1396.6 792.2 L1399.0 792.2 L1401.3 819.7 L1403.7 834.6 L1406.1 827.2 L1408.5 836.1 L1409.2 839.1 L1411.9 864.5 L1414.6 846.6 L1416.9 825.7 L1419.3 766.0 L1422.0 691.3 L1424.4 673.4 L1427.1 649.6 L1429.8 632.5 L1432.5 634.6 L1434.9 645.1 L1437.8 639.1 L1440.2 673.4 L1442.6 724.2 L1445.3 745.1 L1448.3 777.9 L1450.7 789.3 L1453.4 792.2 L1455.7 788.4 L1458.1 792.8 L1460.8 806.3 L1463.8 826.6 L1466.2 830.1 L1468.9 837.6 L1471.3 863.0 L1474.0 874.9 L1476.6 854.0 L1479.6 807.8 L1482.6 766.0 L1485.0 694.3 L1487.1 618.2 L1489.5 615.2 L1492.2 608.4 L1494.9 657.0 L1497.5 621.2 L1499.9 679.4 L1502.9 690.7 L1505.0 721.2 L1508.0 766.0 L1510.4 780.3 L1513.1 777.9 L1515.7 791.3 L1518.4 786.9 L1521.4 789.3 L1523.8 794.3 L1526.8 809.3 L1530.4 831.6 L1533.7 864.5 L1536.3 822.7 L1539.0 855.5 L1541.7 819.7 L1544.1 769.0 L1546.5 710.7 L1549.2 706.3 L1551.9 670.4 L1554.3 643.6 L1557.2 616.7 L1559.6 609.3 L1562.3 682.4 L1565.0 651.9 L1567.7 722.7 L1570.1 756.4 L1572.8 761.5 L1575.1 764.5 L1578.1 780.9 L1581.1 789.3 L1583.5 791.3 L1586.2 795.8 L1588.6 810.7 L1590.7 834.6 L1593.7 851.0 L1596.0 866.9 L1599.0 843.6 L1601.1 857.0 L1603.5 816.7 L1606.5 769.0 L1609.5 722.7 L1611.9 694.3 L1614.3 663.0 L1616.9 666.0 L1619.3 611.3 L1622.0 652.5 L1624.7 679.4 L1627.1 621.8 L1629.5 709.3 L1632.5 763.0 L1635.1 769.9 L1637.8 772.5 L1640.8 780.9 L1643.8 789.9 L1646.2 797.3 L1648.3 800.3 L1651.3 816.7 L1654.3 831.6 L1658.1 863.9 L1661.1 846.6 L1663.5 849.6 L1663.6 849.0 L1666.0 816.7 L1669.0 771.9 L1671.3 685.4 L1674.0 656.1 L1676.4 672.8 L1679.1 634.6 L1681.8 605.4 L1684.5 630.1 L1686.9 639.1 L1689.9 679.4 L1692.2 724.2 L1694.6 785.4 L1697.3 804.8 L1700.0 797.3 L1702.7 793.4 L1704.8 795.2 L1707.2 783.3 L1710.1 795.8 L1712.8 807.2 L1715.2 807.2 L1718.2 822.7 L1720.6 842.1 L1723.3 837.6 L1725.7 843.0 L1728.7 798.8 L1731.0 749.6 L1733.4 755.5 L1736.1 739.1 L1738.5 645.1 L1741.2 632.2 L1743.6 628.7 L1746.6 629.6 L1749.3 674.9 L1751.6 638.2 L1754.3 724.2 L1757.0 767.5 L1760.0 777.3 L1763.0 777.9 L1765.1 780.3 L1767.5 778.8 L1770.4 786.9 L1773.4 800.3 L1776.4 810.7 L1780.9 836.1 L1783.3 855.5 L1786.0 878.8 L1788.4 880.0 L1791.3 801.8 L1793.7 715.2 L1796.4 666.0 L1798.8 631.6 L1801.8 672.8 L1804.2 664.5 L1806.3 663.0 L1809.3 677.9 L1811.9 658.5 L1814.6 671.9 L1817.3 694.3 L1819.7 719.7 L1822.1 780.9 L1824.8 779.4 L1827.2 778.8 L1829.6 783.3 L1832.2 785.4 L1835.2 804.8 L1837.9 821.2 L1840.6 830.1 L1843.0 839.1 L1845.7 858.5 L1848.1 875.8 L1850.4 880.0 L1853.1 846.6 L1855.5 743.6 L1858.2 718.2 L1860.9 649.6 L1863.6 615.2 L1866.0 681.8 L1868.4 658.5 L1871.3 612.2 L1873.7 629.3 L1876.4 652.5 L1879.1 700.3 L1881.5 724.2 L1884.2 789.9 L1886.9 774.3 L1889.9 782.4 L1892.5 791.3 L1895.2 801.8 L1897.6 815.2 L1900.3 819.7 L1902.7 830.1 L1905.4 839.1 L1907.8 866.0 L1910.1 863.0 L1912.8 869.9 L1915.5 798.8 L1917.9 761.5 L1918.1 762.7 L1920.6 681.8 L1923.1 635.2 L1925.9 626.5 L1928.4 681.8 L1931.2 638.9 L1934.0 658.5 L1936.8 667.8 L1939.3 681.8 L1942.1 712.9 L1944.5 737.8 L1947.0 765.1 L1949.2 764.2 L1951.7 776.7 L1954.5 786.0 L1957.3 793.8 L1960.1 801.5 L1962.3 810.9 L1964.8 823.3 L1967.2 840.4 L1970.0 856.9 L1972.8 829.5 L1975.0 838.8 L1978.1 800.0 L1980.6 793.8 L1983.1 700.5 L1985.9 681.8 L1988.4 653.8 L1990.9 647.6 L1993.4 672.5 L1995.8 678.1 L1998.6 647.0 L2001.4 694.3 L2003.9 716.0 L2006.4 740.3 L2008.9 746.5 L2011.7 749.6 L2014.5 740.9 L2017.0 726.9 L2019.8 714.5 L2022.3 713.5 L2024.5 750.2 L2026.9 885.5 L2030.0 880.8 L2032.5 865.3 L2035.3 837.3 L2038.1 828.0 L2040.6 829.5 L2043.1 823.3 L2045.6 807.7 L2048.7 762.7 L2051.8 694.3 L2054.3 616.5 L2055.9 558.1 L2058.3 590.1 L2060.8 563.0 L2063.6 826.4 L2066.1 768.9 L2068.9 793.8 L2071.4 801.5 L2074.2 792.2 L2076.7 785.0 L2079.2 789.1 L2082.0 788.5 L2084.5 805.6 L2087.0 807.7 L2089.8 821.7 L2092.2 828.0 L2094.7 855.9 L2097.5 830.4 L2100.0 845.1 L2102.5 756.4 L2105.3 709.8 L2107.8 649.2 L2110.3 616.5 L2112.8 698.0 L2115.6 683.4 L2118.0 635.8 L2120.8 641.4 L2123.3 663.2 L2125.8 683.4 L2128.6 716.0 L2131.1 763.6 L2133.6 775.1 L2136.1 782.9 L2138.9 771.4 L2141.4 782.9 L2144.2 796.9 L2146.7 817.1 L2149.1 831.1 L2151.9 839.8 L2154.4 842.0 L2156.9 863.7 L2159.7 830.4 L2162.2 839.8 L2164.7 803.1 L2170.0 688.0 L2172.5 616.5 L2175.0 635.2 L2177.8 615.9 L2180.3 622.7 L2183.1 633.6 L2185.5 678.7 L2188.0 697.4 L2190.8 747.1 L2193.3 772.0 L2196.4 781.3 L2198.9 789.1 L2201.4 795.3 L2203.9 792.2 L2206.7 799.4 L2209.2 801.5 L2211.7 809.3 L2214.5 826.4 L2217.0 843.5 L2219.8 859.1 L2222.2 879.3 L2224.7 882.4 L2227.5 778.2 L2230.0 716.0 L2232.8 696.7 L2235.3 712.9 L2237.8 649.2 L2240.3 677.2 L2242.8 614.0 L2245.2 663.2 L2247.7 619.6 L2250.5 660.0 L2253.3 678.7 L2256.1 719.1 L2258.6 804.6 L2261.1 802.5 L2263.3 793.8 L2266.1 826.4 L2268.9 824.9 L2271.4 835.7 L2273.9 828.0 L2276.7 851.3 L2279.1 871.5 L2281.6 880.2 L2284.4 915.0 L2287.2 868.4 L2289.7 731.6 L2292.2 565.2 L2294.7 622.7 L2297.2 730.0 L2300.0 655.4 L2300.0 653.4 L2302.5 650.9 L2305.0 671.7 L2307.6 667.6 L2310.1 678.6 L2312.6 667.6 L2315.1 673.9 L2317.6 710.1 L2320.5 784.2 L2323.0 779.4 L2325.8 773.1 L2328.4 781.0 L2330.9 776.9 L2333.7 792.0 L2336.2 804.7 L2339.1 817.3 L2341.6 850.3 L2344.1 880.9 L2346.6 856.6 L2349.1 853.5 L2351.7 817.3 L2354.2 763.7 L2357.0 719.6 L2359.5 676.1 L2362.1 676.1 L2364.6 672.3 L2367.1 642.4 L2369.9 587.9 L2372.5 617.2 L2375.0 642.4 L2377.8 710.1 L2380.3 757.4 L2382.9 770.0 L2385.4 780.1 L2387.9 781.0 L2390.4 798.3 L2392.9 817.3 L2395.5 828.3 L2398.3 836.2 L2400.8 839.3 L2403.3 851.9 L2406.2 854.4 L2408.7 826.1 L2411.2 837.7 L2413.7 814.1 L2416.6 760.5 L2419.1 703.8 L2421.6 678.6 L2424.4 658.1 L2427.0 672.3 L2432.3 660.4 L2434.8 667.6 L2437.7 680.2 L2440.2 707.0 L2442.7 729.0 L2445.2 729.0 L2447.8 774.7 L2450.3 783.2 L2453.1 788.3 L2455.6 788.3 L2458.2 785.7 L2460.7 809.4 L2463.2 817.3 L2466.0 831.4 L2468.6 840.9 L2471.1 796.8 L2473.6 804.7 L2476.4 813.5 L2479.0 773.1 L2481.5 760.5 L2484.0 694.4 L2486.5 697.5 L2489.0 664.4 L2491.9 669.2 L2494.4 637.0 L2496.9 660.4 L2499.4 658.1 L2502.0 729.0 L2504.8 751.1 L2507.3 763.7 L2509.8 773.1 L2512.7 768.4 L2515.2 770.6 L2517.7 782.6 L2520.5 790.5 L2523.1 795.2 L2525.6 811.0 L2528.4 831.4 L2530.9 853.5 L2533.5 817.3 L2536.3 831.4 L2538.8 801.5 L2541.3 784.2 L2542.0 754.2"/></defs><use href="#wv" stroke="#1f9450" stroke-width="1.45" fill="none" stroke-linejoin="round"/><text x="2347.3" y="563.5" textLength="176" lengthAdjust="spacingAndGlyphs" font-family="Liberation Sans" font-size="15.5" fill="#2a8a5e" stroke="#2a8a5e" stroke-width="0.25">Temp HighPassFilter (°F)</text><text x="690.0" y="953" text-anchor="middle" font-family="Liberation Sans" font-size="14.5" fill="#777">Oct 2</text><path d="M690.0 929 L690.0 933" stroke="#dfe5ef" stroke-width="1"/><text x="814.6" y="953" text-anchor="middle" font-family="Liberation Sans" font-size="14.5" fill="#777">Oct 4</text><path d="M814.6 929 L814.6 933" stroke="#dfe5ef" stroke-width="1"/><text x="939.1" y="953" text-anchor="middle" font-family="Liberation Sans" font-size="14.5" fill="#777">Oct 6</text><path d="M939.1 929 L939.1 933" stroke="#dfe5ef" stroke-width="1"/><text x="1063.7" y="953" text-anchor="middle" font-family="Liberation Sans" font-size="14.5" fill="#777">Oct 8</text><path d="M1063.7 929 L1063.7 933" stroke="#dfe5ef" stroke-width="1"/><text x="1188.3" y="953" text-anchor="middle" font-family="Liberation Sans" font-size="14.5" fill="#777">Oct 10</text><path d="M1188.3 929 L1188.3 933" stroke="#dfe5ef" stroke-width="1"/><text x="1312.8" y="953" text-anchor="middle" font-family="Liberation Sans" font-size="14.5" fill="#777">Oct 12</text><path d="M1312.8 929 L1312.8 933" stroke="#dfe5ef" stroke-width="1"/><text x="1437.4" y="953" text-anchor="middle" font-family="Liberation Sans" font-size="14.5" fill="#777">Oct 14</text><path d="M1437.4 929 L1437.4 933" stroke="#dfe5ef" stroke-width="1"/><text x="1562.0" y="953" text-anchor="middle" font-family="Liberation Sans" font-size="14.5" fill="#777">Oct 16</text><path d="M1562.0 929 L1562.0 933" stroke="#dfe5ef" stroke-width="1"/><text x="1686.6" y="953" text-anchor="middle" font-family="Liberation Sans" font-size="14.5" fill="#777">Oct 18</text><path d="M1686.6 929 L1686.6 933" stroke="#dfe5ef" stroke-width="1"/><text x="1811.1" y="953" text-anchor="middle" font-family="Liberation Sans" font-size="14.5" fill="#777">Oct 20</text><path d="M1811.1 929 L1811.1 933" stroke="#dfe5ef" stroke-width="1"/><text x="1935.7" y="953" text-anchor="middle" font-family="Liberation Sans" font-size="14.5" fill="#777">Oct 22</text><path d="M1935.7 929 L1935.7 933" stroke="#dfe5ef" stroke-width="1"/><text x="2060.3" y="953" text-anchor="middle" font-family="Liberation Sans" font-size="14.5" fill="#777">Oct 24</text><path d="M2060.3 929 L2060.3 933" stroke="#dfe5ef" stroke-width="1"/><text x="2184.8" y="953" text-anchor="middle" font-family="Liberation Sans" font-size="14.5" fill="#777">Oct 26</text><path d="M2184.8 929 L2184.8 933" stroke="#dfe5ef" stroke-width="1"/><text x="2309.4" y="953" text-anchor="middle" font-family="Liberation Sans" font-size="14.5" fill="#777">Oct 28</text><path d="M2309.4 929 L2309.4 933" stroke="#dfe5ef" stroke-width="1"/><text x="2434.0" y="953" text-anchor="middle" font-family="Liberation Sans" font-size="14.5" fill="#777">Oct 30</text><path d="M2434.0 929 L2434.0 933" stroke="#dfe5ef" stroke-width="1"/></svg>
<svg class="a" style="left:624px;top:964px;" width="14" height="18" viewBox="0 0 14 18"><path d="M7 0 L7 14" stroke="#007960" stroke-width="3.2"/><path d="M0.5 10 L7 17.5 L13.5 10Z" fill="#007960"/></svg>
<div class="t " style="left:647.0px;top:965.3px;font-size:15px;color:#007960;font-weight:normal;transform-origin:0 0;transform:scaleX(0.884);">10/1/2018 7:11 AM <u>EDT</u></div>
<div class="t" style="right:15.9px;top:965.3px;font-size:15px;color:#007960;font-weight:normal;transform-origin:100% 0;transform:scaleX(0.879);">10/31/2018 5:11 PM <u>EDT</u></div>
<svg class="a" style="left:1429px;top:964px;" width="20" height="18" viewBox="0 0 20 18"><path d="M10 0 L0 9 L10 18Z M19 0 L9 9 L19 18Z" fill="#007960"/></svg>
<svg class="a" style="left:1466px;top:964px;" width="11" height="18" viewBox="0 0 11 18"><path d="M10 0 L0 9 L10 18Z" fill="#007960"/></svg>
<div class="t" style="left:1519.4px;top:965.3px;font-size:15px;color:#007960;font-weight:normal;transform:translateX(-50%) scaleX(0.941);">1 month</div>
<svg class="a" style="left:1563px;top:964px;" width="11" height="18" viewBox="0 0 11 18"><path d="M0 0 L10 9 L0 18Z" fill="#007960"/></svg>
<svg class="a" style="left:1592px;top:964px;" width="19" height="18" viewBox="0 0 19 18"><path d="M0 0 L9 9 L0 18Z M9 0 L18 9 L9 18Z" fill="#007960"/></svg>
<svg class="a" style="left:1627px;top:964px;" width="13" height="18" viewBox="0 0 13 18"><path d="M0 0 L9 9 L0 18Z" fill="#007960"/><rect x="9.5" y="0" width="3" height="18" fill="#007960"/></svg>
<svg class="a" style="left:1659px;top:967px;" width="14" height="13" viewBox="0 0 14 13"><path d="M12 5 C11 2 9 1 7 1 C4 1 2 3 1.5 5.5 M2 8 C3 11 5 12 7 12 C10 12 12 10 12.5 7.5" stroke="#007960" stroke-width="2" fill="none"/><path d="M13.5 1 L13.5 6 L8.5 6Z M0.5 12 L0.5 7 L5.5 7Z" fill="#007960"/></svg>
<div class="a" style="left:614px;top:988px;width:1943px;height:81px;background:#f4f4f4"></div>
<div class="a" style="left:614px;top:988px;width:1943px;height:1px;background:#ebebeb"></div>
<div class="a" style="left:640px;top:998px;width:1873px;height:18px;background:#f4f4f4;border:2px solid #cfcfcf;border-radius:5px"></div>
<div class="a" style="left:644px;top:999px;width:786px;height:16px;background:#fff;border-top:2.5px solid #007960;border-bottom:2.5px solid #007960"></div>
<div class="a" style="left:640px;top:995px;width:7px;height:25px;background:#dfeee9;border:2px solid #007960"></div>
<div class="a" style="left:1427px;top:995px;width:7px;height:25px;background:#dfeee9;border:2px solid #007960"></div>
<svg class="a" style="left:2524px;top:999px;" width="16" height="19" viewBox="0 0 16 19"><rect x="0" y="0" width="7" height="19" fill="#007960"/><rect x="8.5" y="0" width="7" height="19" fill="#007960"/><path d="M0 10 L2 4 L4.5 15 L7 5 L9.5 14 L12 4 L14.5 15 L16 9" stroke="#fff" stroke-width="1.3" fill="none"/></svg>
<div class="a" style="left:792px;top:1015px;width:1px;height:4px;background:#bbb"></div>
<div class="t" style="left:791.7px;top:1021.8px;font-size:11.5px;color:#999;font-weight:normal;transform:translateX(-50%) ;">Oct 7</div>
<div class="a" style="left:972px;top:1015px;width:1px;height:4px;background:#bbb"></div>
<div class="t" style="left:972.0px;top:1021.8px;font-size:11.5px;color:#999;font-weight:normal;transform:translateX(-50%) ;">Oct 14</div>
<div class="a" style="left:1152px;top:1015px;width:1px;height:4px;background:#bbb"></div>
<div class="t" style="left:1152.3px;top:1021.8px;font-size:11.5px;color:#999;font-weight:normal;transform:translateX(-50%) ;">Oct 21</div>
<div class="a" style="left:1333px;top:1015px;width:1px;height:4px;background:#bbb"></div>
<div class="t" style="left:1332.6px;top:1021.8px;font-size:11.5px;color:#999;font-weight:normal;transform:translateX(-50%) ;">Oct 28</div>
<div class="a" style="left:1513px;top:1015px;width:1px;height:4px;background:#bbb"></div>
<div class="t" style="left:1512.9px;top:1021.8px;font-size:11.5px;color:#999;font-weight:normal;transform:translateX(-50%) ;">Nov 4</div>
<div class="a" style="left:1693px;top:1015px;width:1px;height:4px;background:#bbb"></div>
<div class="t" style="left:1693.2px;top:1021.8px;font-size:11.5px;color:#999;font-weight:normal;transform:translateX(-50%) ;">Nov 11</div>
<div class="a" style="left:1874px;top:1015px;width:1px;height:4px;background:#bbb"></div>
<div class="t" style="left:1873.5px;top:1021.8px;font-size:11.5px;color:#999;font-weight:normal;transform:translateX(-50%) ;">Nov 18</div>
<div class="a" style="left:2054px;top:1015px;width:1px;height:4px;background:#bbb"></div>
<div class="t" style="left:2053.8px;top:1021.8px;font-size:11.5px;color:#999;font-weight:normal;transform:translateX(-50%) ;">Nov 25</div>
<div class="a" style="left:2234px;top:1015px;width:1px;height:4px;background:#bbb"></div>
<div class="t" style="left:2234.1px;top:1021.8px;font-size:11.5px;color:#999;font-weight:normal;transform:translateX(-50%) ;">Dec 2</div>
<div class="a" style="left:2414px;top:1015px;width:1px;height:4px;background:#bbb"></div>
<div class="t" style="left:2414.4px;top:1021.8px;font-size:11.5px;color:#999;font-weight:normal;transform:translateX(-50%) ;">Dec 9</div>
<svg class="a" style="left:624px;top:1044px;" width="14" height="18" viewBox="0 0 14 18"><path d="M7 4 L7 18" stroke="#007960" stroke-width="3.2"/><path d="M0.5 8 L7 0.5 L13.5 8Z" fill="#007960"/></svg>
<div class="t " style="left:647.0px;top:1049.3px;font-size:15px;color:#007960;font-weight:normal;transform-origin:0 0;transform:scaleX(0.922);">10/1/2018</div>
<div class="t" style="left:1591.9px;top:1049.3px;font-size:15px;color:#007960;font-weight:normal;transform:translateX(-50%) scaleX(0.930);">2.4 months</div>
<div class="t" style="right:19.7px;top:1049.3px;font-size:15px;color:#007960;font-weight:normal;transform-origin:100% 0;transform:scaleX(0.912);">12/12/2018</div>
<div class="a" style="left:614px;top:1069px;width:1943px;height:33px;background:#007960"></div>
<svg class="a" style="left:626px;top:1078px;" width="20" height="16" viewBox="0 0 20 16"><path d="M1 0 L1 15 L19 15" stroke="#fff" stroke-width="1.6" fill="none"/><path d="M2 14 L2 6 L6 2 L10 7 L13 4 L17 9 L17 14Z" fill="#fff"/></svg>
<div class="t " style="left:649.0px;top:1077.7px;font-size:16px;color:#fff;font-weight:normal;transform-origin:0 0;transform:scaleX(0.920);">Details</div>
<div class="t" style="right:111.8px;top:1077.7px;font-size:16px;color:#fff;font-weight:normal;transform-origin:100% 0;transform:scaleX(0.891);">Oct 27, 2018 11:37 PM</div>
<div class="a" style="left:2458px;top:1073px;width:95px;height:26px;background:#fff;border-radius:4px"></div>
<svg class="a" style="left:2463px;top:1077px;" width="20" height="17" viewBox="0 0 20 17"><path d="M11.68,7.82 L13.17,8.73 L12.97,9.77 L11.24,10.04 L10.81,10.67 L11.23,12.37 L10.35,12.96 L8.93,11.93 L8.18,12.08 L7.27,13.57 L6.23,13.37 L5.96,11.64 L5.33,11.21 L3.63,11.63 L3.04,10.75 L4.07,9.33 L3.92,8.58 L2.43,7.67 L2.63,6.63 L4.36,6.36 L4.79,5.73 L4.37,4.03 L5.25,3.44 L6.67,4.47 L7.42,4.32 L8.33,2.83 L9.37,3.03 L9.64,4.76 L10.27,5.19 L11.97,4.77 L12.56,5.65 L11.53,7.07Z M9.70,8.20 A1.9,1.9 0 1 0 5.90,8.20 A1.9,1.9 0 1 0 9.70,8.20Z" fill="#333" fill-rule="evenodd"/><path d="M18.08,3.61 L19.07,4.32 L18.86,5.12 L17.65,5.24 L17.24,5.65 L17.12,6.86 L16.32,7.07 L15.61,6.08 L15.06,5.93 L13.95,6.44 L13.36,5.85 L13.87,4.74 L13.72,4.19 L12.73,3.48 L12.94,2.68 L14.15,2.56 L14.56,2.15 L14.68,0.94 L15.48,0.73 L16.19,1.72 L16.74,1.87 L17.85,1.36 L18.44,1.95 L17.93,3.06Z M17.00,3.90 A1.1,1.1 0 1 0 14.80,3.90 A1.1,1.1 0 1 0 17.00,3.90Z" fill="#333" fill-rule="evenodd"/><path d="M18.08,12.31 L19.07,13.02 L18.86,13.82 L17.65,13.94 L17.24,14.35 L17.12,15.56 L16.32,15.77 L15.61,14.78 L15.06,14.63 L13.95,15.14 L13.36,14.55 L13.87,13.44 L13.72,12.89 L12.73,12.18 L12.94,11.38 L14.15,11.26 L14.56,10.85 L14.68,9.64 L15.48,9.43 L16.19,10.42 L16.74,10.57 L17.85,10.06 L18.44,10.65 L17.93,11.76Z M17.00,12.60 A1.1,1.1 0 1 0 14.80,12.60 A1.1,1.1 0 1 0 17.00,12.60Z" fill="#333" fill-rule="evenodd"/></svg>
<div class="t " style="left:2485.3px;top:1079.2px;font-size:13.5px;color:#333;font-weight:normal;transform-origin:0 0;transform:scaleX(0.935);">Customize</div>
<div class="a" style="left:614px;top:1102px;width:1943px;height:104px;background:#fff"></div>
<div class="a" style="left:614px;top:1134px;width:1943px;height:2px;background:#ddd"></div>
<div class="a" style="left:614px;top:1136px;width:1943px;height:27px;background:#f7f7f7"></div>
<div class="a" style="left:614px;top:1162px;width:1943px;height:1.5px;background:#e3e3e3"></div>
<svg class="a" style="left:708px;top:1115px;" width="11" height="11" viewBox="0 0 11 11"><path d="M1.5 1.5 L9.5 9.5 M9.5 1.5 L1.5 9.5" stroke="#777" stroke-width="3"/></svg>
<svg class="a" style="left:732px;top:1112px;" width="14" height="15" viewBox="0 0 14 15"><rect x="1" y="1" width="12" height="12.4" rx="2.6" stroke="#666" stroke-width="1.25" fill="#fff"/></svg>
<svg class="a" style="left:793px;top:1113px;" width="10" height="13" viewBox="0 0 10 13"><path d="M0.5 5.5 L5 0.5 L9.5 5.5Z M0.5 7.5 L5 12.5 L9.5 7.5Z" fill="#777"/></svg>
<div class="t " style="left:812.4px;top:1112.5px;font-size:15.5px;color:#222;font-weight:bold;transform-origin:0 0;transform:scaleX(0.940);">Name</div>
<svg class="a" style="left:862px;top:1113px;" width="10" height="13" viewBox="0 0 10 13"><path d="M0.5 5.5 L5 0.5 L9.5 5.5Z M0.5 7.5 L5 12.5 L9.5 7.5Z" fill="#777"/></svg>
<div class="t " style="left:2341.7px;top:1112.5px;font-size:15.5px;color:#222;font-weight:bold;transform-origin:0 0;transform:scaleX(0.854);">Assets</div>
<div class="t " style="left:2394.3px;top:1112.5px;font-size:15.5px;color:#1e7f6b;font-weight:bold;transform-origin:0 0;transform:scaleX(0.912);">Lane</div>
<svg class="a" style="left:2437px;top:1113px;" width="10" height="7" viewBox="0 0 10 7"><path d="M0.5 6.5 L5 0.5 L9.5 6.5Z" fill="#007960"/></svg>
<svg class="a" style="left:2529px;top:1108px;" width="20" height="17" viewBox="0 0 20 17"><path d="M1.5 1 H14.5 V14 H1.5Z M1.5 4.5 H14.5 M1.5 8 H14.5 M1.5 11 H14.5 M5 1 V14 M8.5 1 V14 M12 1 V14" stroke="#555" stroke-width="1" fill="none"/><rect x="1" y="0.5" width="14" height="2" fill="#555"/><circle cx="13.1" cy="10" r="5.5" fill="#222"/><path d="M13.1 7 V13 M10.1 10 H16.1" stroke="#fff" stroke-width="1.8"/></svg>
<svg class="a" style="left:618px;top:1140px;" width="18" height="15" viewBox="0 0 18 15"><rect x="1.5" y="2.2" width="11.8" height="11.8" rx="2.6" stroke="#4a9d8a" stroke-width="1.4" fill="none"/><path d="M6.3 10.8 L6.8 8.3 L14.2 0.9 L16.7 3.4 L9.3 10.8Z" fill="#007960" stroke="#f7f7f7" stroke-width="0.8"/></svg>
<svg class="a" style="left:652px;top:1140px;" width="15" height="16" viewBox="0 0 15 16"><path d="M14.6 0.4 C10 0.6 6.5 2.8 4.4 6.3 L1.2 6.6 L0.2 9.2 L3.4 9.4 L5.6 11.6 L5.8 15 L8.4 13.8 L8.7 10.6 C12.2 8.5 14.4 5 14.6 0.4Z" fill="#007960"/><circle cx="11" cy="3.9" r="1.1" fill="#f7f7f7"/></svg>
<svg class="a" style="left:683px;top:1140px;" width="15" height="15" viewBox="0 0 15 15"><circle cx="7.3" cy="7.4" r="7" fill="#007960"/><path d="M5.8 6.2 H8.6 V11.2 H9.6 V12.3 H5.6 V11.2 H6.6 V7.3 H5.8Z" fill="#fff"/><circle cx="7.7" cy="3.9" r="1.3" fill="#fff"/></svg>
<svg class="a" style="left:708px;top:1142px;" width="11" height="11" viewBox="0 0 11 11"><path d="M1.5 1.5 L9.5 9.5 M9.5 1.5 L1.5 9.5" stroke="#007960" stroke-width="3"/></svg>
<svg class="a" style="left:732px;top:1141px;" width="14" height="14" viewBox="0 0 14 14"><rect x="1" y="0.9" width="12" height="12.4" rx="2.6" stroke="#666" stroke-width="1.25" fill="none"/></svg>
<svg class="a" style="left:759.4px;top:1136.6px;" width="22" height="21" viewBox="0 0 22 21"><path d="M2.00 12.59 L5.33 2.00 L8.97 14.43 L12.21 5.77 L15.43 18.40 L18.88 11.87 L19.60 15.64" stroke="#1b9150" stroke-width="2.0" fill="none" stroke-linejoin="miter"/></svg>
<div class="t " style="left:787.5px;top:1141.3px;font-size:15px;color:#333;font-weight:normal;transform-origin:0 0;transform:scaleX(0.857);">°F</div>
<div class="t " style="left:812.2px;top:1141.3px;font-size:15px;color:#222;font-weight:normal;transform-origin:0 0;transform:scaleX(1.028);">Temp HighPassFilter</div>
<div class="t " style="left:2341.5px;top:1141.3px;font-size:15px;color:#1e7f6b;font-weight:normal;transform-origin:0 0;transform:scaleX(0.939);"><u>Area A</u></div>
<div class="t " style="left:2436.5px;top:1141.3px;font-size:15px;color:#333;font-weight:normal;transform-origin:0 0;">1</div>
<div class="t" style="right:2.9px;top:1141.3px;font-size:15px;color:#1b8e55;font-weight:normal;transform-origin:100% 0;transform:scaleX(0.957);">5.3032</div>
<svg class="a" style="left:618px;top:1168px;" width="18" height="15" viewBox="0 0 18 15"><rect x="1.5" y="2.2" width="11.8" height="11.8" rx="2.6" stroke="#4a9d8a" stroke-width="1.4" fill="none"/><path d="M6.3 10.8 L6.8 8.3 L14.2 0.9 L16.7 3.4 L9.3 10.8Z" fill="#007960" stroke="#f7f7f7" stroke-width="0.8"/></svg>
<svg class="a" style="left:652px;top:1168px;" width="15" height="16" viewBox="0 0 15 16"><path d="M14.6 0.4 C10 0.6 6.5 2.8 4.4 6.3 L1.2 6.6 L0.2 9.2 L3.4 9.4 L5.6 11.6 L5.8 15 L8.4 13.8 L8.7 10.6 C12.2 8.5 14.4 5 14.6 0.4Z" fill="#007960"/><circle cx="11" cy="3.9" r="1.1" fill="#f7f7f7"/></svg>
<svg class="a" style="left:683px;top:1168px;" width="15" height="15" viewBox="0 0 15 15"><circle cx="7.3" cy="7.4" r="7" fill="#007960"/><path d="M5.8 6.2 H8.6 V11.2 H9.6 V12.3 H5.6 V11.2 H6.6 V7.3 H5.8Z" fill="#fff"/><circle cx="7.7" cy="3.9" r="1.3" fill="#fff"/></svg>
<svg class="a" style="left:708px;top:1170px;" width="11" height="11" viewBox="0 0 11 11"><path d="M1.5 1.5 L9.5 9.5 M9.5 1.5 L1.5 9.5" stroke="#007960" stroke-width="3"/></svg>
<svg class="a" style="left:732px;top:1169px;" width="14" height="14" viewBox="0 0 14 14"><rect x="1" y="0.9" width="12" height="12.4" rx="2.6" stroke="#666" stroke-width="1.25" fill="none"/></svg>
<svg class="a" style="left:761px;top:1165px;" width="19" height="19" viewBox="0 0 19 19"><path d="M1 0.5 V17.6 H18" stroke="#3f51a5" stroke-width="1.3" fill="none"/><rect x="4" y="10.8" width="3" height="6" fill="#3f51a5"/><rect x="9" y="2.5" width="3" height="14.3" fill="#3f51a5"/><rect x="13.7" y="7.6" width="3.1" height="9.2" fill="#3f51a5"/></svg>
<div class="t " style="left:812.2px;top:1169.3px;font-size:15px;color:#222;font-weight:normal;transform-origin:0 0;transform:scaleX(1.003);">Temp HighPassFilter FFT</div>
<div class="t " style="left:2341.5px;top:1169.3px;font-size:15px;color:#1e7f6b;font-weight:normal;transform-origin:0 0;transform:scaleX(0.939);"><u>Area A</u></div>
</body></html>
